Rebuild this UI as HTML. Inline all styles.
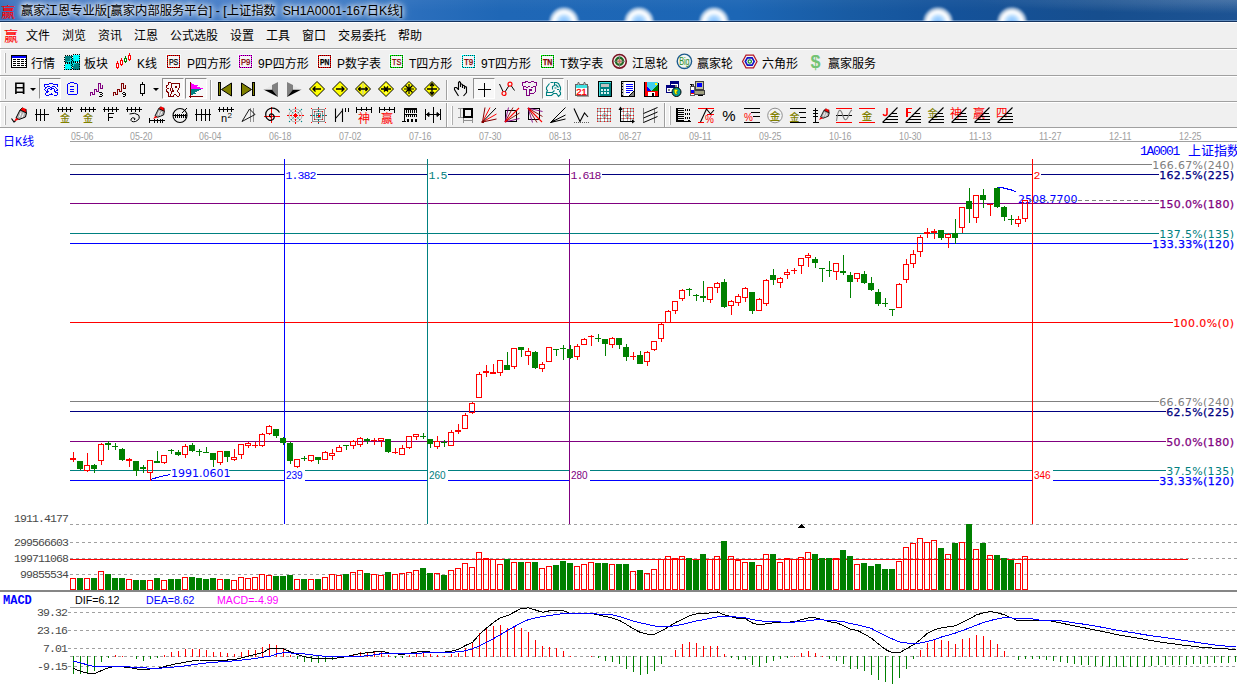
<!DOCTYPE html>
<html><head><meta charset="utf-8"><title>chart</title><style>
html,body{margin:0;padding:0}
body{width:1237px;height:685px;overflow:hidden;background:#fff;position:relative;font-family:"Liberation Sans","Noto Sans CJK SC",sans-serif;font-size:12px}
#title{position:absolute;left:0;top:0;width:1237px;height:21px;overflow:hidden;border-bottom:1px solid #14335f;box-shadow:inset 0 -1px 0 rgba(150,185,225,.55);
 background:linear-gradient(90deg,#3c6fb9 0,#4577c0 20px,#4a80ca 120px,#3f7ac5 330px,#2a6ebc 420px,#1f67b6 500px,#1c66b5 740px,#185ba3 850px,#14529a 950px,#164e8e 1100px,#1d5393 1237px)}
#title:before{content:"";position:absolute;left:0;top:0;width:100%;height:21px;background:linear-gradient(180deg,rgba(255,255,255,.04),rgba(255,255,255,0) 55%),radial-gradient(ellipse 260px 14px at 1237px 0,rgba(255,255,255,.16),rgba(255,255,255,0))}
.blob{position:absolute;top:6.5px;width:30px;height:30px;border-radius:50%;filter:blur(1.2px);background:radial-gradient(circle at 50% 50%,#86c0ff 0,#a4d3ff 22%,#f4faff 42%,#ffffff 50%,rgba(255,255,255,.55) 64%,rgba(200,225,255,.18) 80%,rgba(255,255,255,0) 100%)}
#tt{position:absolute;left:21px;top:3px;font-size:12.3px;line-height:17px;color:#000;white-space:nowrap;text-shadow:0 0 5px #fff,0 0 6px #fff,0 0 8px #fff}
.logo{position:absolute;font-family:"Noto Sans CJK SC",sans-serif;font-size:14px;line-height:16px;color:#f00;font-weight:400}
#menu{position:absolute;left:0;top:22px;width:1237px;height:26px;background:#f0f0f0;border-top:1px solid #fff;border-bottom:1px solid #a0a0a0;box-sizing:content-box;height:25px}
.mi{position:absolute;top:5px;line-height:16px;font-size:12px;color:#000}
.tb{position:absolute;left:0;width:1237px;background:#f0f0f0;border-top:1px solid #fff;box-sizing:border-box;border-bottom:1px solid #a0a0a0}
.grip{position:absolute;width:1px;background:#b0b0b0;border-left:1px solid #fff}
.sep{position:absolute;width:1px;background:#a0a0a0;border-right:1px solid #fff}
.ic{position:absolute;overflow:visible}
.tt{position:absolute;top:5.5px;line-height:16px;font-size:12px;color:#000;white-space:nowrap}
.ri{position:absolute;font-family:"Noto Sans CJK SC",sans-serif;font-weight:700;font-size:12.5px;line-height:14px;color:#000;transform:scaleX(1.08);transform-origin:0 0}
.dd{position:absolute;width:0;height:0;border-left:3px solid transparent;border-right:3px solid transparent;border-top:3px solid #000}
.pressed{position:absolute;width:22px;height:21px;background:#f8f8f8;border-left:1px solid #909090;border-top:1px solid #909090;border-right:1px solid #fff;border-bottom:1px solid #fff;box-sizing:border-box}
svg text{white-space:pre}
.dt{font-family:"Liberation Sans",sans-serif;font-size:10px;fill:#a0a0a0}
.ss{font-family:"Liberation Mono","Noto Sans CJK SC",sans-serif;font-size:12px}
.mono{font-family:"Liberation Mono",monospace;font-size:11.5px;letter-spacing:-0.9px}
.vd{font-family:"DejaVu Sans",sans-serif;font-size:11px}
.ar{font-family:"Liberation Sans",sans-serif;font-size:10px}
.ar11{font-family:"Liberation Sans",sans-serif;font-size:11px}
</style></head><body>
<div id="title"><div class="blob" style="left:548.5px"></div><div class="blob" style="left:623.5px"></div><div class="blob" style="left:699px"></div><div class="blob" style="left:923px"></div><div class="blob" style="left:997px"></div><span class="logo" style="left:1px;top:3px">赢</span><span id="tt">赢家江恩专业版[赢家内部服务平台] - [上证指数&nbsp; SH1A0001-167日K线]</span></div>
<div id="menu"><span class="logo" style="left:4px;top:4px">赢</span><span class="mi" style="left:26px">文件</span><span class="mi" style="left:62px">浏览</span><span class="mi" style="left:98px">资讯</span><span class="mi" style="left:134px">江恩</span><span class="mi" style="left:170px">公式选股</span><span class="mi" style="left:230px">设置</span><span class="mi" style="left:266px">工具</span><span class="mi" style="left:302px">窗口</span><span class="mi" style="left:338px">交易委托</span><span class="mi" style="left:398px">帮助</span></div>
<div class="tb" style="top:49px;height:27px"><div class="grip" style="left:4px;top:3px;height:20px"></div><svg class="ic" style="left:11px;top:4px" width="16" height="16" viewBox="0 0 16 16"><g shape-rendering="crispEdges"><rect x="0.5" y="1.5" width="15" height="12" fill="#fff" stroke="#000"/><rect x="1" y="2" width="14" height="2" fill="#0000ff"/><line x1="2" y1="5.5" x2="15" y2="5.5" stroke="#000" stroke-dasharray="3 1"/><line x1="2" y1="7.5" x2="15" y2="7.5" stroke="#000" stroke-dasharray="3 1"/><line x1="2" y1="9.5" x2="15" y2="9.5" stroke="#000" stroke-dasharray="3 1"/><line x1="2" y1="11.5" x2="15" y2="11.5" stroke="#000" stroke-dasharray="3 1"/></g></svg><span class="tt" style="left:31px">行情</span><svg class="ic" style="left:64px;top:4px" width="16" height="16" viewBox="0 0 16 16"><g shape-rendering="crispEdges"><rect x="0.5" y="1.5" width="7" height="7" fill="#008080"/><rect x="8.5" y="0.5" width="7" height="7" fill="#00ffff"/><rect x="0.5" y="9.5" width="7" height="6" fill="#00ffff"/><rect x="8.5" y="8.5" width="7" height="7" fill="#008080"/><rect x="6" y="4" width="4" height="8" fill="#00d8d8"/><rect x="3" y="7" width="9" height="3" fill="#00d8d8"/><rect x="2" y="3" width="4" height="4" fill="#008080"/><rect x="10" y="10" width="4" height="4" fill="#008080"/><rect x="10" y="2" width="4" height="4" fill="#00ffff"/><rect x="2" y="11" width="4" height="3" fill="#00ffff"/><rect x="0.5" y="1.5" width="7" height="7" fill="none" stroke="#000" stroke-dasharray="1 1"/><rect x="8.5" y="0.5" width="7" height="7" fill="none" stroke="#000" stroke-dasharray="1 1"/><rect x="0.5" y="9.5" width="7" height="6" fill="none" stroke="#000" stroke-dasharray="1 1"/><rect x="8.5" y="8.5" width="7" height="7" fill="none" stroke="#000" stroke-dasharray="1 1"/></g></svg><span class="tt" style="left:84px">板块</span><svg class="ic" style="left:116px;top:4px" width="16" height="16" viewBox="0 0 16 16"><g shape-rendering="crispEdges"><line x1="1.5" y1="7" x2="1.5" y2="15" stroke="#ff0000" stroke-width="1"/><rect x="0.5" y="9.5" width="2" height="4" fill="#fff" stroke="#ff0000"/><line x1="5.5" y1="4" x2="5.5" y2="12" stroke="#ff0000" stroke-width="1"/><rect x="4.5" y="6.5" width="2" height="4" fill="#fff" stroke="#ff0000"/><line x1="9.5" y1="2" x2="9.5" y2="9" stroke="#008000" stroke-width="1"/><rect x="8.5" y="4.5" width="2" height="3" fill="#fff" stroke="#008000"/><line x1="13.5" y1="-1" x2="13.5" y2="7" stroke="#ff0000" stroke-width="1"/><rect x="12.5" y="1.5" width="2" height="4" fill="#fff" stroke="#ff0000"/></g></svg><span class="tt" style="left:137px">K线</span><svg class="ic" style="left:167px;top:4px" width="16" height="16" viewBox="0 0 16 16"><g shape-rendering="crispEdges"><rect x="-0.5" y="0.5" width="14" height="14" fill="none" stroke="#f4fcfc"/><rect x="0.5" y="1.5" width="12" height="12" fill="#f6f6f6" stroke="#ff0000"/><rect x="0.5" y="1.5" width="12" height="12" fill="none" stroke="#000" stroke-opacity=".7" stroke-dasharray="1 1" stroke-dashoffset="1"/></g><text x="6.6" y="10.7" fill="#000" font-size="8.2" font-family="Liberation Sans,'Noto Sans CJK SC',sans-serif" font-weight="normal" text-anchor="middle" textLength="9.4" lengthAdjust="spacingAndGlyphs" stroke="#000" stroke-width=".25">PS</text></svg><span class="tt" style="left:187px">P四方形</span><svg class="ic" style="left:239px;top:4px" width="16" height="16" viewBox="0 0 16 16"><g shape-rendering="crispEdges"><rect x="-0.5" y="0.5" width="14" height="14" fill="none" stroke="#f4fcfc"/><rect x="0.5" y="1.5" width="12" height="12" fill="#f6f6f6" stroke="#ff00ff"/><rect x="0.5" y="1.5" width="12" height="12" fill="none" stroke="#000" stroke-opacity=".7" stroke-dasharray="1 1" stroke-dashoffset="1"/></g><text x="6.6" y="10.7" fill="#800000" font-size="8.2" font-family="Liberation Sans,'Noto Sans CJK SC',sans-serif" font-weight="normal" text-anchor="middle" textLength="9.4" lengthAdjust="spacingAndGlyphs" stroke="#800000" stroke-width=".25">P9</text></svg><span class="tt" style="left:258px">9P四方形</span><svg class="ic" style="left:318px;top:4px" width="16" height="16" viewBox="0 0 16 16"><g shape-rendering="crispEdges"><rect x="-0.5" y="0.5" width="14" height="14" fill="none" stroke="#f4fcfc"/><rect x="0.5" y="1.5" width="12" height="12" fill="#f6f6f6" stroke="#ff0000"/><rect x="0.5" y="1.5" width="12" height="12" fill="none" stroke="#000" stroke-opacity=".7" stroke-dasharray="1 1" stroke-dashoffset="1"/></g><text x="6.6" y="10.7" fill="#000" font-size="8.2" font-family="Liberation Sans,'Noto Sans CJK SC',sans-serif" font-weight="bold" text-anchor="middle" textLength="9.4" lengthAdjust="spacingAndGlyphs" stroke="#000" stroke-width=".25">PN</text></svg><span class="tt" style="left:337px">P数字表</span><svg class="ic" style="left:390px;top:4px" width="16" height="16" viewBox="0 0 16 16"><g shape-rendering="crispEdges"><rect x="-0.5" y="0.5" width="14" height="14" fill="none" stroke="#f4fcfc"/><rect x="0.5" y="1.5" width="12" height="12" fill="#f6f6f6" stroke="#00ff00"/><rect x="0.5" y="1.5" width="12" height="12" fill="none" stroke="#000" stroke-opacity=".7" stroke-dasharray="1 1" stroke-dashoffset="1"/></g><text x="6.6" y="10.7" fill="#800000" font-size="8.2" font-family="Liberation Sans,'Noto Sans CJK SC',sans-serif" font-weight="normal" text-anchor="middle" textLength="9.4" lengthAdjust="spacingAndGlyphs" stroke="#800000" stroke-width=".25">TS</text></svg><span class="tt" style="left:409px">T四方形</span><svg class="ic" style="left:462px;top:4px" width="16" height="16" viewBox="0 0 16 16"><g shape-rendering="crispEdges"><rect x="-0.5" y="0.5" width="14" height="14" fill="none" stroke="#f4fcfc"/><rect x="0.5" y="1.5" width="12" height="12" fill="#f6f6f6" stroke="#00ffff"/><rect x="0.5" y="1.5" width="12" height="12" fill="none" stroke="#000" stroke-opacity=".7" stroke-dasharray="1 1" stroke-dashoffset="1"/></g><text x="6.6" y="10.7" fill="#800000" font-size="8.2" font-family="Liberation Sans,'Noto Sans CJK SC',sans-serif" font-weight="normal" text-anchor="middle" textLength="9.4" lengthAdjust="spacingAndGlyphs" stroke="#800000" stroke-width=".25">T9</text></svg><span class="tt" style="left:481px">9T四方形</span><svg class="ic" style="left:541px;top:4px" width="16" height="16" viewBox="0 0 16 16"><g shape-rendering="crispEdges"><rect x="-0.5" y="0.5" width="14" height="14" fill="none" stroke="#f4fcfc"/><rect x="0.5" y="1.5" width="12" height="12" fill="#f6f6f6" stroke="#00ff00"/><rect x="0.5" y="1.5" width="12" height="12" fill="none" stroke="#000" stroke-opacity=".7" stroke-dasharray="1 1" stroke-dashoffset="1"/></g><text x="6.6" y="10.7" fill="#800000" font-size="8.2" font-family="Liberation Sans,'Noto Sans CJK SC',sans-serif" font-weight="bold" text-anchor="middle" textLength="9.4" lengthAdjust="spacingAndGlyphs" stroke="#800000" stroke-width=".25">TN</text></svg><span class="tt" style="left:560px">T数字表</span><svg class="ic" style="left:611px;top:4px" width="16" height="16" viewBox="0 0 16 16"><circle cx="8.5" cy="7.3" r="6.8" fill="#f0ebe6" stroke="#7a1424" stroke-width="1.6"/><circle cx="8.5" cy="7.3" r="3.6" fill="#f0b4a4" stroke="#1c6c24" stroke-width="2.2"/><path d="M2.5 7.3H14.5M8.5 1.3V13.3" stroke="#808080" stroke-width=".9" fill="none"/><circle cx="8.5" cy="7.3" r="1" fill="#e86848"/></svg><span class="tt" style="left:632px">江恩轮</span><svg class="ic" style="left:676px;top:4px" width="16" height="16" viewBox="0 0 16 16"><circle cx="8.4" cy="7.3" r="7.2" fill="#f2f6f2" stroke="#1c5a8c" stroke-width="1.4"/><text x="8.4" y="10.9" fill="#2a8a2a" font-size="10" font-family="Liberation Sans,'Noto Sans CJK SC',sans-serif" font-weight="normal" text-anchor="middle" textLength="10.5" lengthAdjust="spacingAndGlyphs">Big</text></svg><span class="tt" style="left:697px">赢家轮</span><svg class="ic" style="left:741px;top:4px" width="16" height="16" viewBox="0 0 16 16"><polygon points="1.5,7.5 5,1.2 12.5,1.2 16,7.5 12.5,13.8 5,13.8" fill="#f4f4f4" stroke="#b41424" stroke-width="1.2"/><polygon points="4.3,7.5 6.4,3.9 11.1,3.9 13.2,7.5 11.1,11.1 6.4,11.1" fill="#fff" stroke="#1414c4" stroke-width="1.6"/><circle cx="8.75" cy="7.5" r="1.7" fill="#fff" stroke="#108828" stroke-width="1.2"/></svg><span class="tt" style="left:762px">六角形</span><svg class="ic" style="left:808px;top:4px" width="16" height="16" viewBox="0 0 16 16"><text x="7.5" y="14.2" fill="#74c474" font-size="18" font-family="Liberation Sans,'Noto Sans CJK SC',sans-serif" font-weight="bold" text-anchor="middle">$</text></svg><span class="tt" style="left:828px">赢家服务</span></div>
<div class="tb" style="top:76px;height:26px"><div class="grip" style="left:4px;top:3px;height:19px"></div><span class="ri" style="left:12.5px;top:4px">日</span><div class="dd" style="left:30px;top:11px"></div><div class="pressed" style="left:39px;top:1px"></div><div class="pressed" style="left:162px;top:1px"></div><div class="pressed" style="left:185px;top:1px"></div><div class="pressed" style="left:473px;top:1px"></div><div class="pressed" style="left:542px;top:1px"></div><svg class="ic" style="left:43px;top:4px" width="16" height="16" viewBox="0 0 16 16"><g shape-rendering="crispEdges"><rect x="6" y="2" width="4" height="1" fill="#0000ff"/><rect x="1" y="3" width="5" height="1" fill="#0000ff"/><rect x="10" y="3" width="5" height="1" fill="#0000ff"/><rect x="1" y="4" width="1" height="1" fill="#0000ff"/><rect x="14" y="4" width="1" height="1" fill="#0000ff"/><rect x="1" y="5" width="1" height="1" fill="#0000ff"/><rect x="4" y="5" width="3" height="1" fill="#0000ff"/><rect x="9" y="5" width="3" height="1" fill="#0000ff"/><rect x="14" y="5" width="1" height="1" fill="#0000ff"/><rect x="2" y="6" width="2" height="1" fill="#0000ff"/><rect x="7" y="6" width="2" height="1" fill="#0000ff"/><rect x="12" y="6" width="1" height="1" fill="#0000ff"/><rect x="2" y="7" width="1" height="1" fill="#0000ff"/><rect x="5" y="7" width="2" height="1" fill="#0000ff"/><rect x="8" y="7" width="3" height="1" fill="#0000ff"/><rect x="13" y="7" width="1" height="1" fill="#0000ff"/><rect x="1" y="8" width="1" height="1" fill="#0000ff"/><rect x="4" y="8" width="1" height="1" fill="#0000ff"/><rect x="7" y="8" width="2" height="1" fill="#0000ff"/><rect x="11" y="8" width="1" height="1" fill="#0000ff"/><rect x="14" y="8" width="1" height="1" fill="#0000ff"/><rect x="2" y="9" width="1" height="1" fill="#0000ff"/><rect x="4" y="9" width="1" height="1" fill="#0000ff"/><rect x="11" y="9" width="1" height="1" fill="#0000ff"/><rect x="13" y="9" width="2" height="1" fill="#0000ff"/><rect x="3" y="10" width="3" height="1" fill="#0000ff"/><rect x="11" y="10" width="2" height="1" fill="#0000ff"/><rect x="3" y="11" width="2" height="1" fill="#0000ff"/><rect x="12" y="11" width="3" height="1" fill="#0000ff"/><rect x="2" y="12" width="1" height="1" fill="#0000ff"/><rect x="8" y="12" width="1" height="1" fill="#0000ff"/><rect x="14" y="12" width="1" height="1" fill="#0000ff"/><rect x="2" y="13" width="1" height="1" fill="#0000ff"/><rect x="6" y="13" width="4" height="1" fill="#0000ff"/><rect x="14" y="13" width="1" height="1" fill="#0000ff"/><rect x="3" y="14" width="3" height="1" fill="#0000ff"/><rect x="11" y="14" width="3" height="1" fill="#0000ff"/></g></svg><svg class="ic" style="left:66px;top:4px" width="16" height="16" viewBox="0 0 16 16"><g shape-rendering="crispEdges"><path d="M2 2.5H4 M8 2.5H11 M4 1.5H8 M1.5 3V13 M11.5 3V13 M2 13.5H11 M4 5.5H8 M4 8.5H8 M4 10.5H8" stroke="#0000ff" fill="none" stroke-width="1" /></g></svg><svg class="ic" style="left:89px;top:4px" width="16" height="16" viewBox="0 0 16 16"><g shape-rendering="crispEdges"><path d="M1.5 15 V11.5 H3.5 V13.5 H5.5 V8.5 H7.5 V10.5 H9.5 V2.5 H11.5 V7.5 H13.5 V4" stroke="#800080" fill="none" stroke-width="1" /><rect x="10" y="11" width="1" height="1" fill="#000"/><rect x="11" y="11" width="1" height="1" fill="#000"/><rect x="12" y="11" width="1" height="1" fill="#000"/><rect x="13" y="12" width="1" height="1" fill="#000"/><rect x="11" y="13" width="1" height="1" fill="#000"/><rect x="12" y="13" width="1" height="1" fill="#000"/><rect x="13" y="14" width="1" height="1" fill="#000"/><rect x="10" y="15" width="1" height="1" fill="#000"/><rect x="11" y="15" width="1" height="1" fill="#000"/><rect x="12" y="15" width="1" height="1" fill="#000"/></g></svg><svg class="ic" style="left:112px;top:4px" width="16" height="16" viewBox="0 0 16 16"><g shape-rendering="crispEdges"><path d="M1.5 15 V11.5 H3.5 V13.5 H5.5 V8.5 H7.5 V10.5 H9.5 V2.5 H11.5 V7.5 H13.5 V4" stroke="#800000" fill="none" stroke-width="1" /><rect x="11" y="11" width="1" height="1" fill="#000"/><rect x="12" y="11" width="1" height="1" fill="#000"/><rect x="10" y="12" width="1" height="1" fill="#000"/><rect x="13" y="12" width="1" height="1" fill="#000"/><rect x="11" y="13" width="1" height="1" fill="#000"/><rect x="12" y="13" width="1" height="1" fill="#000"/><rect x="13" y="13" width="1" height="1" fill="#000"/><rect x="13" y="14" width="1" height="1" fill="#000"/><rect x="11" y="15" width="1" height="1" fill="#000"/><rect x="12" y="15" width="1" height="1" fill="#000"/></g></svg><svg class="ic" style="left:136px;top:4px" width="16" height="16" viewBox="0 0 16 16"><g shape-rendering="crispEdges"><line x1="6.5" y1="1" x2="6.5" y2="15" stroke="#000" stroke-width="1"/><rect x="4.5" y="3.5" width="4" height="9" fill="#f0f0f0" stroke="#000"/><line x1="5" y1="3" x2="9" y2="3" stroke="#000" stroke-width="0"/></g></svg><svg class="ic" style="left:166px;top:4px" width="16" height="16" viewBox="0 0 16 16"><g shape-rendering="crispEdges"><rect x="2" y="1" width="3" height="1" fill="#800000"/><rect x="2" y="2" width="1" height="1" fill="#800000"/><rect x="5" y="2" width="9" height="1" fill="#800000"/><rect x="2" y="3" width="1" height="1" fill="#800000"/><rect x="5" y="3" width="1" height="1" fill="#800000"/><rect x="13" y="3" width="1" height="1" fill="#800000"/><rect x="0" y="4" width="2" height="1" fill="#800000"/><rect x="5" y="4" width="1" height="1" fill="#800000"/><rect x="13" y="4" width="1" height="1" fill="#800000"/><rect x="0" y="5" width="1" height="1" fill="#800000"/><rect x="5" y="5" width="1" height="1" fill="#800000"/><rect x="9" y="5" width="2" height="1" fill="#800000"/><rect x="13" y="5" width="1" height="1" fill="#800000"/><rect x="0" y="6" width="1" height="1" fill="#800000"/><rect x="5" y="6" width="1" height="1" fill="#800000"/><rect x="9" y="6" width="2" height="1" fill="#800000"/><rect x="13" y="6" width="1" height="1" fill="#800000"/><rect x="1" y="7" width="2" height="1" fill="#800000"/><rect x="4" y="7" width="1" height="1" fill="#800000"/><rect x="6" y="7" width="1" height="1" fill="#800000"/><rect x="12" y="7" width="1" height="1" fill="#800000"/><rect x="0" y="8" width="1" height="1" fill="#800000"/><rect x="4" y="8" width="1" height="1" fill="#800000"/><rect x="6" y="8" width="1" height="1" fill="#800000"/><rect x="12" y="8" width="1" height="1" fill="#800000"/><rect x="0" y="9" width="1" height="1" fill="#800000"/><rect x="4" y="9" width="1" height="1" fill="#800000"/><rect x="6" y="9" width="2" height="1" fill="#800000"/><rect x="11" y="9" width="1" height="1" fill="#800000"/><rect x="0" y="10" width="2" height="1" fill="#800000"/><rect x="5" y="10" width="3" height="1" fill="#800000"/><rect x="11" y="10" width="1" height="1" fill="#800000"/><rect x="1" y="11" width="2" height="1" fill="#800000"/><rect x="5" y="11" width="1" height="1" fill="#800000"/><rect x="12" y="11" width="1" height="1" fill="#800000"/><rect x="2" y="12" width="1" height="1" fill="#800000"/><rect x="5" y="12" width="1" height="1" fill="#800000"/><rect x="13" y="12" width="1" height="1" fill="#800000"/><rect x="2" y="13" width="1" height="1" fill="#800000"/><rect x="4" y="13" width="1" height="1" fill="#800000"/><rect x="8" y="13" width="2" height="1" fill="#800000"/><rect x="13" y="13" width="1" height="1" fill="#800000"/><rect x="2" y="14" width="1" height="1" fill="#800000"/><rect x="4" y="14" width="1" height="1" fill="#800000"/><rect x="7" y="14" width="1" height="1" fill="#800000"/><rect x="10" y="14" width="1" height="1" fill="#800000"/><rect x="13" y="14" width="1" height="1" fill="#800000"/><rect x="2" y="15" width="6" height="1" fill="#800000"/><rect x="11" y="15" width="2" height="1" fill="#800000"/></g></svg><svg class="ic" style="left:189px;top:4px" width="16" height="16" viewBox="0 0 16 16"><g shape-rendering="crispEdges"><g transform="translate(-1,1)"><polygon points="3,1 3,7 15,7 15,6 12,6 12,5 9,5 9,4 10,4 10,3 6,3 6,2 4,2 4,1" fill="#ff00ff"/><polygon points="3,7 13,7 13,8 11,8 11,9 9,9 9,10 7,10 7,11 8,11 8,12 5,12 5,13 3,13" fill="#008080"/><line x1="2.5" y1="0" x2="2.5" y2="16" stroke="#800000" stroke-width="1"/><line x1="1" y1="14.5" x2="15" y2="14.5" stroke="#800000" stroke-width="1"/><line x1="1" y1="14" x2="2" y2="14" stroke="#800000" stroke-width="1"/></g></g></svg><svg class="ic" style="left:217px;top:4px" width="16" height="16" viewBox="0 0 16 16"><g shape-rendering="crispEdges"><rect x="1.5" y="1.5" width="2" height="13" fill="#808000" stroke="#000"/></g><polygon points="14.5,2 14.5,15 4.5,8.5" fill="#808000" stroke="#000"/></svg><svg class="ic" style="left:240px;top:4px" width="16" height="16" viewBox="0 0 16 16"><g shape-rendering="crispEdges"><rect x="12.5" y="1.5" width="2" height="13" fill="#808000" stroke="#000"/></g><polygon points="1.5,2 1.5,15 11.5,8.5" fill="#808000" stroke="#000"/></svg><svg class="ic" style="left:263px;top:4px" width="16" height="16" viewBox="0 0 16 16"><polygon points="0.5,8.5 15,1 15,8.5" fill="#fff"/><polygon points="9,4 15,1 15,16 9,8.5" fill="#808080"/><polygon points="0.5,8.5 9,8.5 15,16" fill="#000"/><polygon points="0.5,8.5 9,4 9,8.5" fill="#e8e8e8"/></svg><svg class="ic" style="left:286px;top:4px" width="16" height="16" viewBox="0 0 16 16"><polygon points="15.5,8.5 1,1 1,8.5" fill="#fff"/><polygon points="7,4 1,1 1,16 7,8.5" fill="#808080"/><polygon points="15.5,8.5 7,8.5 1,16" fill="#000"/><polygon points="15.5,8.5 7,4 7,8.5" fill="#e8e8e8"/></svg><svg class="ic" style="left:309px;top:4px" width="16" height="16" viewBox="0 0 16 16"><polygon points="8,0.5 15.5,8 8,15.5 0.5,8" fill="#ffff00" stroke="#000" stroke-width="1"/><path d="M12 8H4 M6.5 5.5L4 8L6.5 10.5" stroke="#000" fill="none" stroke-width="1.3" /></svg><svg class="ic" style="left:332px;top:4px" width="16" height="16" viewBox="0 0 16 16"><polygon points="8,0.5 15.5,8 8,15.5 0.5,8" fill="#ffff00" stroke="#000" stroke-width="1"/><path d="M4 8H12 M9.5 5.5L12 8L9.5 10.5" stroke="#000" fill="none" stroke-width="1.3" /></svg><svg class="ic" style="left:355px;top:4px" width="16" height="16" viewBox="0 0 16 16"><polygon points="8,0.5 15.5,8 8,15.5 0.5,8" fill="#ffff00" stroke="#000" stroke-width="1"/><line x1="8" y1="2" x2="8" y2="14" stroke="#c0c0c0" stroke-width="1"/><path d="M3.5 8H12.5 M5.5 6L3.5 8L5.5 10 M10.5 6L12.5 8L10.5 10" stroke="#000" fill="none" stroke-width="1.3" /></svg><svg class="ic" style="left:378px;top:4px" width="16" height="16" viewBox="0 0 16 16"><polygon points="8,0.5 15.5,8 8,15.5 0.5,8" fill="#ffff00" stroke="#000" stroke-width="1"/><path d="M3 8H13 M6 5.5L8 8L6 10.5 M10 5.5L8 8L10 10.5" stroke="#000" fill="none" stroke-width="1.3" /><circle cx="8" cy="4" r=".7" fill="#fff"/><circle cx="8" cy="12" r=".7" fill="#fff"/></svg><svg class="ic" style="left:401px;top:4px" width="16" height="16" viewBox="0 0 16 16"><polygon points="8,0.5 15.5,8 8,15.5 0.5,8" fill="#ffff00" stroke="#000" stroke-width="1"/><path d="M3 8H13 M8 3V13 M4.5 4.5L11.5 11.5 M11.5 4.5L4.5 11.5" stroke="#000" fill="none" stroke-width="1.2" /></svg><svg class="ic" style="left:424px;top:4px" width="16" height="16" viewBox="0 0 16 16"><polygon points="8,0.5 15.5,8 8,15.5 0.5,8" fill="#ffff00" stroke="#000" stroke-width="1"/><path d="M3 8H13 M8 2.5V13.5 M6 5L8 2.5L10 5 M6 11L8 13.5L10 11" stroke="#000" fill="none" stroke-width="1.3" /></svg><svg class="ic" style="left:453px;top:4px" width="16" height="16" viewBox="0 0 16 16"><path d="M1.5 6.5H3.5L5.5 8.5 M1.5 6.5V8.5L5.5 15 M5.5 9V1.5L6.5 0.5L7.5 1.5V6 M7.5 2.5L9.5 3.5V7 M9.5 4L11.5 4.8V8 M11.5 5.2L13.5 6.2V11.5L10.5 15" stroke="#000" fill="none" stroke-width="1.1" /></svg><svg class="ic" style="left:477px;top:4px" width="16" height="16" viewBox="0 0 16 16"><g shape-rendering="crispEdges"><line x1="1" y1="8.5" x2="14" y2="8.5" stroke="#000" stroke-width="1"/><line x1="7.5" y1="2" x2="7.5" y2="16" stroke="#000" stroke-width="1"/></g></svg><svg class="ic" style="left:499px;top:4px" width="16" height="16" viewBox="0 0 16 16"><path d="M0.5 3 L5 12.5 L11 3 L15.5 9.5" stroke="#000" fill="none" stroke-width="1" /><circle cx="5" cy="12.5" r="2" fill="#f0f0f0" stroke="#ff0000" stroke-width="1.2"/><circle cx="11" cy="3.2" r="2" fill="#f0f0f0" stroke="#ff0000" stroke-width="1.2"/></svg><svg class="ic" style="left:522px;top:4px" width="16" height="16" viewBox="0 0 16 16"><g shape-rendering="crispEdges"><rect x="3" y="0" width="3" height="1" fill="#800080"/><rect x="9" y="0" width="3" height="1" fill="#800080"/><rect x="0" y="1" width="4" height="1" fill="#800080"/><rect x="6" y="1" width="3" height="1" fill="#800080"/><rect x="12" y="1" width="3" height="1" fill="#800080"/><rect x="0" y="2" width="1" height="1" fill="#800080"/><rect x="14" y="2" width="1" height="1" fill="#800080"/><rect x="0" y="3" width="1" height="1" fill="#800080"/><rect x="14" y="3" width="1" height="1" fill="#800080"/><rect x="0" y="4" width="1" height="1" fill="#800080"/><rect x="14" y="4" width="1" height="1" fill="#800080"/><rect x="1" y="5" width="3" height="1" fill="#800080"/><rect x="6" y="5" width="2" height="1" fill="#800080"/><rect x="11" y="5" width="3" height="1" fill="#800080"/><rect x="1" y="6" width="1" height="1" fill="#800080"/><rect x="4" y="6" width="2" height="1" fill="#800080"/><rect x="9" y="6" width="2" height="1" fill="#800080"/><rect x="13" y="6" width="1" height="1" fill="#800080"/><rect x="1" y="7" width="1" height="1" fill="#800080"/><rect x="13" y="7" width="1" height="1" fill="#800080"/><rect x="1" y="8" width="4" height="1" fill="#800080"/><rect x="7" y="8" width="3" height="1" fill="#800080"/><rect x="13" y="8" width="1" height="1" fill="#800080"/><rect x="4" y="9" width="1" height="1" fill="#800080"/><rect x="7" y="9" width="3" height="1" fill="#800080"/><rect x="13" y="9" width="1" height="1" fill="#800080"/><rect x="4" y="10" width="1" height="1" fill="#800080"/><rect x="7" y="10" width="1" height="1" fill="#800080"/><rect x="13" y="10" width="1" height="1" fill="#800080"/><rect x="4" y="11" width="1" height="1" fill="#800080"/><rect x="7" y="11" width="1" height="1" fill="#800080"/><rect x="12" y="11" width="1" height="1" fill="#800080"/><rect x="4" y="12" width="1" height="1" fill="#800080"/><rect x="7" y="12" width="5" height="1" fill="#800080"/><rect x="4" y="13" width="1" height="1" fill="#800080"/><rect x="7" y="13" width="1" height="1" fill="#800080"/><rect x="4" y="14" width="4" height="1" fill="#800080"/></g></svg><svg class="ic" style="left:546px;top:4px" width="16" height="16" viewBox="0 0 16 16"><path d="M4.5 1.5H7.5 M3.5 2.5L0.5 6.5V8.5L1.5 9.5L0.5 11.5V14.5H5.5L7.5 12.5H10.5L12.5 15.5L14.5 13.5V11.5L13.5 10.5L14.5 8.5V6.5L12.5 2.5L10.5 1.5H8.5V4.5L6.5 5.5V8.5 M0.5 11.5H6.5L8.5 9.5 M9.5 3.5L12.5 6.5 M8.5 7H10.5 M11 8.5H13" stroke="#008080" fill="none" stroke-width="1.1" /></svg><svg class="ic" style="left:574px;top:4px" width="16" height="16" viewBox="0 0 16 16"><g shape-rendering="crispEdges"><rect x="1.5" y="3.5" width="12" height="11" fill="#fff" stroke="#606060"/><rect x="2" y="4" width="11" height="3" fill="#40e0e0"/><line x1="14.5" y1="5" x2="14.5" y2="15" stroke="#a0a0a0" stroke-width="1"/><line x1="3" y1="15.5" x2="15" y2="15.5" stroke="#a0a0a0" stroke-width="1"/></g><path d="M3.5 3.5L4.5 1L5.5 3.5 M9.5 3.5L10.5 1L11.5 3.5" stroke="#606060" fill="#fff" stroke-width="1" /><text x="7.5" y="14.3" fill="#ff0000" font-size="9.5" font-family="Liberation Sans,'Noto Sans CJK SC',sans-serif" font-weight="normal" text-anchor="middle" stroke="#ff0000" stroke-width=".3">21</text></svg><svg class="ic" style="left:597px;top:4px" width="16" height="16" viewBox="0 0 16 16"><g shape-rendering="crispEdges"><rect x="1.5" y="0.5" width="13" height="15" fill="#008080" stroke="#000"/><rect x="2" y="1" width="12" height="1" fill="#40e0e0"/><rect x="2" y="1" width="1" height="14" fill="#40e0e0"/><rect x="4" y="3" width="8" height="3" fill="#c0c0c0"/><rect x="4" y="8" width="2" height="2" fill="#d8f0f0"/><rect x="4" y="11" width="2" height="2" fill="#d8f0f0"/><rect x="7" y="8" width="2" height="2" fill="#d8f0f0"/><rect x="7" y="11" width="2" height="2" fill="#d8f0f0"/><rect x="10" y="8" width="2" height="2" fill="#d8f0f0"/><rect x="10" y="11" width="2" height="2" fill="#d8f0f0"/></g></svg><svg class="ic" style="left:620px;top:4px" width="16" height="16" viewBox="0 0 16 16"><g shape-rendering="crispEdges"><rect x="1.5" y="0.5" width="13" height="15" fill="#fff" stroke="#000"/><rect x="2" y="1" width="2" height="14" fill="#c0c0c0"/><rect x="2" y="2" width="1" height="1" fill="#000"/><rect x="2" y="5" width="1" height="1" fill="#000"/><rect x="2" y="8" width="1" height="1" fill="#000"/><rect x="2" y="11" width="1" height="1" fill="#000"/><rect x="2" y="14" width="1" height="1" fill="#000"/><line x1="6" y1="3.5" x2="13" y2="3.5" stroke="#0000ff" stroke-width="1"/><line x1="6" y1="5.5" x2="13" y2="5.5" stroke="#0000ff" stroke-width="1"/><line x1="6" y1="7.5" x2="13" y2="7.5" stroke="#0000ff" stroke-width="1"/><line x1="6" y1="9.5" x2="13" y2="9.5" stroke="#0000ff" stroke-width="1"/><line x1="6" y1="11.5" x2="10" y2="11.5" stroke="#0000ff" stroke-width="1"/><polygon points="14,10 14,15 9,15" fill="#808080" stroke="#000"/></g></svg><svg class="ic" style="left:643px;top:4px" width="16" height="16" viewBox="0 0 16 16"><g shape-rendering="crispEdges"><rect x="1" y="1" width="14" height="14" fill="#ff0000"/><rect x="1" y="1" width="1" height="14" fill="#000"/><rect x="4" y="1" width="11" height="9" fill="#40d0f0"/><polygon points="15,4 15,10 8,10" fill="#008000"/><polygon points="4,6 4,10 9,10" fill="#0000ff"/><rect x="12" y="2" width="2" height="2" fill="#ffff00"/><rect x="5" y="11" width="7" height="4" fill="#fff"/><rect x="9" y="12" width="2" height="3" fill="#000"/><rect x="1" y="15" width="14" height="1" fill="#000"/><rect x="15" y="2" width="1" height="14" fill="#000"/></g></svg><svg class="ic" style="left:666px;top:4px" width="16" height="16" viewBox="0 0 16 16"><g shape-rendering="crispEdges"><rect x="4.5" y="0.5" width="8" height="7" fill="#fff" stroke="#000080"/><rect x="5" y="1" width="7" height="2" fill="#000080"/><rect x="0.5" y="4.5" width="8" height="7" fill="#fff" stroke="#000080"/><rect x="1" y="5" width="7" height="2" fill="#000080"/><rect x="2" y="8" width="2" height="2" fill="#808080"/><rect x="9" y="4" width="2" height="2" fill="#808080"/></g><circle cx="10.5" cy="11" r="4.5" fill="#00a0a0" stroke="#000"/><path d="M8 9 L10 8 L12 9.5 L10.5 11 L11.5 13 L9.5 13.5 L8.5 11.5Z" stroke="#606000" fill="#ffff00" stroke-width="0.6" /></svg><svg class="ic" style="left:689px;top:4px" width="16" height="16" viewBox="0 0 16 16"><g shape-rendering="crispEdges"><rect x="6.5" y="0.5" width="8" height="8" fill="#c0c0a0" stroke="#404040"/><rect x="8" y="2" width="5" height="4" fill="#0000ff"/><rect x="5.5" y="9.5" width="10" height="4" fill="#a0a080" stroke="#404040"/><rect x="9" y="14" width="5" height="1" fill="#000"/><rect x="1.5" y="5.5" width="4" height="9" fill="#fff" stroke="#606060"/><rect x="2" y="9" width="3" height="3" fill="#0000ff"/><rect x="2" y="12" width="3" height="1" fill="#ff0000"/><rect x="2.5" y="3.5" width="2" height="2" fill="#a0a0a0" stroke="#404040"/><line x1="1" y1="3" x2="3" y2="4.5" stroke="#000" stroke-width="1"/></g></svg><div class="dd" style="left:153px;top:11px"></div><div class="sep" style="left:210px;top:3px;height:20px"></div><div class="sep" style="left:446px;top:3px;height:20px"></div><div class="sep" style="left:567px;top:3px;height:20px"></div></div>
<div class="tb" style="top:102px;height:26px"><div class="grip" style="left:4px;top:3px;height:19px"></div><svg class="ic" style="left:11px;top:4px" width="16" height="16" viewBox="0 0 16 16"><polygon points="9,3 11.5,0.5 15,2 15.5,6" fill="#ff0000"/><polygon points="9,3 15.5,6 14.5,10 8,12.5 5,11" fill="#b0b0b0" stroke="#000" stroke-width="1"/><polygon points="5,11 8,12.5 3,14.5" fill="#ff0000"/><path d="M9 3 L11.5 0.5 M15 2 L15.5 6" stroke="#000" fill="none" stroke-width=".8"/><path d="M10 5.5L8.5 10 M12.5 6.5L11 10.5" stroke="#fff" fill="none" stroke-width="1"/><path d="M0.5 11.5 L3 15 L4.5 14" stroke="#000" fill="none" stroke-width="1.1" /></svg><svg class="ic" style="left:34px;top:4px" width="16" height="16" viewBox="0 0 16 16"><g shape-rendering="crispEdges"><line x1="1" y1="7.5" x2="15" y2="7.5" stroke="#000" stroke-width="1"/><line x1="2.5" y1="2" x2="2.5" y2="14" stroke="#000" stroke-width="1"/><line x1="6.5" y1="2" x2="6.5" y2="14" stroke="#000" stroke-width="1"/><line x1="10.5" y1="2" x2="10.5" y2="14" stroke="#000" stroke-width="1"/></g></svg><svg class="ic" style="left:57px;top:4px" width="16" height="16" viewBox="0 0 16 16"><g shape-rendering="crispEdges"><line x1="0" y1="2.5" x2="16" y2="2.5" stroke="#000" stroke-width="1"/><line x1="1.5" y1="0" x2="1.5" y2="5" stroke="#000" stroke-width="1"/><line x1="5.5" y1="0" x2="5.5" y2="5" stroke="#000" stroke-width="1"/><line x1="9.5" y1="0" x2="9.5" y2="5" stroke="#000" stroke-width="1"/><line x1="13.5" y1="0" x2="13.5" y2="5" stroke="#000" stroke-width="1"/></g><text x="8" y="15" fill="#808000" font-size="10" font-family="Noto Sans CJK SC,'Noto Sans CJK SC',sans-serif" font-weight="500" text-anchor="middle">金</text></svg><svg class="ic" style="left:80px;top:4px" width="16" height="16" viewBox="0 0 16 16"><g shape-rendering="crispEdges"><line x1="0" y1="2.5" x2="16" y2="2.5" stroke="#000" stroke-width="1"/><line x1="1.5" y1="0" x2="1.5" y2="5" stroke="#000" stroke-width="1"/><line x1="5.5" y1="0" x2="5.5" y2="5" stroke="#000" stroke-width="1"/><line x1="9.5" y1="0" x2="9.5" y2="5" stroke="#000" stroke-width="1"/><line x1="13.5" y1="0" x2="13.5" y2="5" stroke="#000" stroke-width="1"/></g><text x="8" y="15" fill="#808000" font-size="10" font-family="Noto Sans CJK SC,'Noto Sans CJK SC',sans-serif" font-weight="500" text-anchor="middle">金</text></svg><svg class="ic" style="left:103px;top:4px" width="16" height="16" viewBox="0 0 16 16"><g shape-rendering="crispEdges"><line x1="0" y1="2.5" x2="16" y2="2.5" stroke="#000" stroke-width="1"/><line x1="1.5" y1="0" x2="1.5" y2="5" stroke="#000" stroke-width="1"/><line x1="5.5" y1="0" x2="5.5" y2="5" stroke="#000" stroke-width="1"/><line x1="9.5" y1="0" x2="9.5" y2="5" stroke="#000" stroke-width="1"/><line x1="13.5" y1="0" x2="13.5" y2="5" stroke="#000" stroke-width="1"/></g><g shape-rendering="crispEdges"><path d="M5.5 14V6.5H10.5 M5.5 10.5H9.5" stroke="#000" fill="none" stroke-width="1.3" /></g></svg><svg class="ic" style="left:126px;top:4px" width="16" height="16" viewBox="0 0 16 16"><g shape-rendering="crispEdges"><line x1="0" y1="2.5" x2="16" y2="2.5" stroke="#000" stroke-width="1"/><line x1="1.5" y1="0" x2="1.5" y2="5" stroke="#000" stroke-width="1"/><line x1="5.5" y1="0" x2="5.5" y2="5" stroke="#000" stroke-width="1"/><line x1="9.5" y1="0" x2="9.5" y2="5" stroke="#000" stroke-width="1"/><line x1="13.5" y1="0" x2="13.5" y2="5" stroke="#000" stroke-width="1"/></g><path d="M3.5 7 Q9 5 12.5 8 Q15 12 9.5 14.5 Q4.5 15.5 5 12 Q6.5 9.5 9 11.5 Q9.5 12.5 8 12.8" stroke="#000" fill="none" stroke-width="1" /></svg><svg class="ic" style="left:149px;top:4px" width="16" height="16" viewBox="0 0 16 16"><g transform="translate(1.5,-1) scale(.9)"><polygon points="9,3 11.5,0.5 15,2 15.5,6" fill="#ff0000"/><polygon points="9,3 15.5,6 14.5,10 8,12.5 5,11" fill="#b0b0b0" stroke="#000" stroke-width="1"/><polygon points="5,11 8,12.5 3,14.5" fill="#ff0000"/><path d="M9 3 L11.5 0.5 M15 2 L15.5 6" stroke="#000" fill="none" stroke-width=".8"/><path d="M10 5.5L8.5 10 M12.5 6.5L11 10.5" stroke="#fff" fill="none" stroke-width="1"/></g><g shape-rendering="crispEdges"><line x1="0" y1="13.5" x2="16" y2="13.5" stroke="#000" stroke-width="1"/><line x1="0.5" y1="11" x2="0.5" y2="16" stroke="#000" stroke-width="1"/><line x1="5.5" y1="11.5" x2="5.5" y2="15.5" stroke="#000" stroke-width="1"/><line x1="8.5" y1="11.5" x2="8.5" y2="15.5" stroke="#000" stroke-width="1"/><line x1="11.5" y1="11.5" x2="11.5" y2="15.5" stroke="#000" stroke-width="1"/><line x1="13.5" y1="11.5" x2="13.5" y2="15.5" stroke="#000" stroke-width="1"/></g></svg><svg class="ic" style="left:172px;top:4px" width="16" height="16" viewBox="0 0 16 16"><circle cx="8" cy="8.5" r="7" fill="none" stroke="#000" stroke-width="1.1"/><g shape-rendering="crispEdges"><line x1="1" y1="8.5" x2="15" y2="8.5" stroke="#000" stroke-width="1"/><line x1="3.5" y1="6.5" x2="3.5" y2="10.5" stroke="#000" stroke-width="1"/><line x1="5.5" y1="6.5" x2="5.5" y2="10.5" stroke="#000" stroke-width="1"/><line x1="7.5" y1="6.5" x2="7.5" y2="10.5" stroke="#000" stroke-width="1"/><line x1="9.5" y1="6.5" x2="9.5" y2="10.5" stroke="#000" stroke-width="1"/><line x1="11.5" y1="6.5" x2="11.5" y2="10.5" stroke="#000" stroke-width="1"/><line x1="13.5" y1="6.5" x2="13.5" y2="10.5" stroke="#000" stroke-width="1"/></g><line x1="10" y1="6" x2="15" y2="1" stroke="#000" stroke-width="1"/></svg><svg class="ic" style="left:195px;top:4px" width="16" height="16" viewBox="0 0 16 16"><g shape-rendering="crispEdges"><line x1="0" y1="7.5" x2="16" y2="7.5" stroke="#000" stroke-width="1"/><line x1="1.5" y1="2" x2="1.5" y2="14" stroke="#000" stroke-width="1"/><line x1="6.5" y1="2" x2="6.5" y2="14" stroke="#000" stroke-width="1"/><line x1="10.5" y1="2" x2="10.5" y2="14" stroke="#000" stroke-width="1"/><line x1="14.5" y1="2" x2="14.5" y2="14" stroke="#000" stroke-width="1"/></g></svg><svg class="ic" style="left:218px;top:4px" width="16" height="16" viewBox="0 0 16 16"><g shape-rendering="crispEdges"><line x1="0" y1="2.5" x2="16" y2="2.5" stroke="#000" stroke-width="1"/><line x1="1.5" y1="0" x2="1.5" y2="5" stroke="#000" stroke-width="1"/><line x1="5.5" y1="0" x2="5.5" y2="5" stroke="#000" stroke-width="1"/><line x1="9.5" y1="0" x2="9.5" y2="5" stroke="#000" stroke-width="1"/><line x1="13.5" y1="0" x2="13.5" y2="5" stroke="#000" stroke-width="1"/></g><text x="3" y="15" fill="#000" font-size="11" font-family="Liberation Sans,'Noto Sans CJK SC',sans-serif" font-weight="normal" >n</text><text x="9.5" y="11" fill="#000" font-size="8" font-family="Liberation Sans,'Noto Sans CJK SC',sans-serif" font-weight="normal" >2</text></svg><svg class="ic" style="left:241px;top:4px" width="16" height="16" viewBox="0 0 16 16"><g shape-rendering="crispEdges"><line x1="9.5" y1="1" x2="9.5" y2="15" stroke="#909090" stroke-width="1"/><line x1="12.5" y1="1" x2="12.5" y2="15" stroke="#909090" stroke-width="1"/></g><path d="M1 14.5 L8.5 2 L14 7.5 L1 14.5" stroke="#000" fill="none" stroke-width="0.9" /></svg><svg class="ic" style="left:264px;top:4px" width="16" height="16" viewBox="0 0 16 16"><g shape-rendering="crispEdges"><line x1="0" y1="9.5" x2="16" y2="9.5" stroke="#ff0000" stroke-width="1"/><line x1="7.5" y1="0" x2="7.5" y2="16" stroke="#ff0000" stroke-width="1"/><line x1="0" y1="9" x2="16" y2="9" stroke="#ff0000" stroke-width="1"/></g><path d="M15.5 5.5 Q12 0 6 1.5 Q0.5 4 2 10 Q4.5 15 9 12.5 Q11.5 10 9 7.5 Q7 6 5.5 8 Q5.5 10 7.5 10" stroke="#000" fill="none" stroke-width="1.2" /></svg><svg class="ic" style="left:287px;top:4px" width="16" height="16" viewBox="0 0 16 16"><circle cx="8.5" cy="8.5" r="6.5" fill="none" stroke="#a0a0a0" stroke-width=".8"/><circle cx="8.5" cy="8.5" r="4" fill="none" stroke="#a0a0a0" stroke-width=".8"/><g shape-rendering="crispEdges"><path d="M0 8.5H17 M8.5 0V17" stroke="#ff0000" fill="none" stroke-width="1" stroke-dasharray="2 1"/></g><path d="M3.5 3.5L13.5 13.5 M13.5 3.5L3.5 13.5" stroke="#008080" fill="none" stroke-width="0.9" stroke-dasharray="1.4 1"/><g shape-rendering="crispEdges"><rect x="7" y="7" width="3" height="3" fill="#ff0000"/></g><circle cx="2.5" cy="2.5" r=".7" fill="#008080"/><circle cx="14.5" cy="2.5" r=".7" fill="#008080"/><circle cx="2.5" cy="14.5" r=".7" fill="#008080"/><circle cx="14.5" cy="14.5" r=".7" fill="#008080"/></svg><svg class="ic" style="left:310px;top:4px" width="16" height="16" viewBox="0 0 16 16"><g shape-rendering="crispEdges"><rect x="2.5" y="2.5" width="12" height="12" fill="none" stroke="#909090"/><rect x="4.5" y="4.5" width="8" height="8" fill="none" stroke="#909090"/><rect x="6.5" y="6.5" width="4" height="4" fill="none" stroke="#909090"/><path d="M0 8.5H17 M8.5 0V17" stroke="#008080" fill="none" stroke-width="1" stroke-dasharray="2 1"/><rect x="1" y="1" width="1" height="1" fill="#ff0000"/><rect x="15" y="1" width="1" height="1" fill="#ff0000"/><rect x="1" y="15" width="1" height="1" fill="#ff0000"/><rect x="15" y="15" width="1" height="1" fill="#ff0000"/><rect x="4" y="4" width="1" height="1" fill="#ff0000"/><rect x="12" y="4" width="1" height="1" fill="#ff0000"/><rect x="4" y="12" width="1" height="1" fill="#ff0000"/><rect x="12" y="12" width="1" height="1" fill="#ff0000"/><rect x="8" y="1" width="1" height="1" fill="#ff0000"/><rect x="8" y="15" width="1" height="1" fill="#ff0000"/><rect x="1" y="8" width="1" height="1" fill="#ff0000"/><rect x="15" y="8" width="1" height="1" fill="#ff0000"/><rect x="7.5" y="7.5" width="2" height="2" fill="#ff0000"/></g></svg><svg class="ic" style="left:333px;top:4px" width="16" height="16" viewBox="0 0 16 16"><path d="M2.5 1.5V15 M2.5 11.5L9.5 3.5 M9.5 1.5V15" stroke="#000" fill="none" stroke-width="1.1" /><g shape-rendering="crispEdges"><line x1="12.5" y1="1" x2="12.5" y2="5" stroke="#000" stroke-width="1"/><line x1="15.5" y1="1" x2="15.5" y2="5" stroke="#000" stroke-width="1"/></g></svg><svg class="ic" style="left:356px;top:4px" width="16" height="16" viewBox="0 0 16 16"><g shape-rendering="crispEdges"><line x1="0" y1="2.5" x2="16" y2="2.5" stroke="#000" stroke-width="1"/><line x1="0.5" y1="0" x2="0.5" y2="6" stroke="#000" stroke-width="1"/><line x1="15.5" y1="0" x2="15.5" y2="6" stroke="#000" stroke-width="1"/><line x1="5.5" y1="0" x2="5.5" y2="4" stroke="#000" stroke-width="1"/><line x1="10.5" y1="0" x2="10.5" y2="4" stroke="#000" stroke-width="1"/></g><text x="8" y="15.6" fill="#ff0000" font-size="12" font-family="Noto Sans CJK SC,'Noto Sans CJK SC',sans-serif" font-weight="normal" text-anchor="middle">神</text></svg><svg class="ic" style="left:379px;top:4px" width="16" height="16" viewBox="0 0 16 16"><g shape-rendering="crispEdges"><line x1="0" y1="2.5" x2="16" y2="2.5" stroke="#000" stroke-width="1"/><line x1="0.5" y1="0" x2="0.5" y2="6" stroke="#000" stroke-width="1"/><line x1="15.5" y1="0" x2="15.5" y2="6" stroke="#000" stroke-width="1"/><line x1="5.5" y1="0" x2="5.5" y2="4" stroke="#000" stroke-width="1"/><line x1="10.5" y1="0" x2="10.5" y2="4" stroke="#000" stroke-width="1"/></g><text x="8" y="15.6" fill="#ff0000" font-size="12" font-family="Noto Sans CJK SC,'Noto Sans CJK SC',sans-serif" font-weight="normal" text-anchor="middle">赢</text></svg><svg class="ic" style="left:402px;top:4px" width="16" height="16" viewBox="0 0 16 16"><g shape-rendering="crispEdges"><rect x="2" y="1" width="13" height="2" fill="#000"/><line x1="2.5" y1="1" x2="2.5" y2="15" stroke="#000" stroke-width="1"/><line x1="0" y1="14.5" x2="4" y2="14.5" stroke="#000" stroke-width="1"/><line x1="4.5" y1="3" x2="4.5" y2="6" stroke="#000" stroke-width="1"/><line x1="6.5" y1="3" x2="6.5" y2="6" stroke="#000" stroke-width="1"/><line x1="8.5" y1="3" x2="8.5" y2="6" stroke="#000" stroke-width="1"/><line x1="10.5" y1="3" x2="10.5" y2="6" stroke="#000" stroke-width="1"/><line x1="12.5" y1="3" x2="12.5" y2="6" stroke="#000" stroke-width="1"/><line x1="14.5" y1="3" x2="14.5" y2="6" stroke="#000" stroke-width="1"/><line x1="3" y1="7.5" x2="15" y2="7.5" stroke="#000" stroke-width="1"/><line x1="4.5" y1="7" x2="4.5" y2="10" stroke="#000" stroke-width="1"/><line x1="6.5" y1="7" x2="6.5" y2="10" stroke="#000" stroke-width="1"/><line x1="8.5" y1="7" x2="8.5" y2="10" stroke="#000" stroke-width="1"/><line x1="10.5" y1="7" x2="10.5" y2="10" stroke="#000" stroke-width="1"/><line x1="12.5" y1="7" x2="12.5" y2="10" stroke="#000" stroke-width="1"/><line x1="14.5" y1="7" x2="14.5" y2="10" stroke="#000" stroke-width="1"/><rect x="5" y="12" width="2" height="3" fill="#000"/><rect x="9" y="12" width="2" height="3" fill="#000"/><rect x="13" y="12" width="2" height="3" fill="#000"/></g></svg><svg class="ic" style="left:425px;top:4px" width="16" height="16" viewBox="0 0 16 16"><g shape-rendering="crispEdges"><line x1="0.5" y1="2" x2="0.5" y2="13" stroke="#000" stroke-width="1"/><line x1="15.5" y1="2" x2="15.5" y2="13" stroke="#000" stroke-width="1"/><line x1="8.5" y1="0" x2="8.5" y2="16" stroke="#000" stroke-width="1"/><line x1="1" y1="7.5" x2="15" y2="7.5" stroke="#000" stroke-width="1"/></g><path d="M4 5.5L1.5 7.5L4 9.5Z M12 5.5L14.5 7.5L12 9.5Z" stroke="#000" fill="#000" stroke-width="1" /></svg><div class="sep" style="left:446px;top:0px;height:24px"></div><div class="grip" style="left:451px;top:3px;height:19px"></div><svg class="ic" style="left:458px;top:4px" width="16" height="16" viewBox="0 0 16 16"><g shape-rendering="crispEdges"><rect x="6" y="2" width="8" height="8" fill="none" stroke="#000" stroke-width="2"/><line x1="0" y1="1.5" x2="5" y2="1.5" stroke="#909090" stroke-width="1"/><line x1="0" y1="10.5" x2="5" y2="10.5" stroke="#909090" stroke-width="1"/><line x1="2.5" y1="2" x2="2.5" y2="10" stroke="#909090" stroke-width="1"/><line x1="5.5" y1="11" x2="5.5" y2="16" stroke="#909090" stroke-width="1"/><line x1="14.5" y1="11" x2="14.5" y2="16" stroke="#909090" stroke-width="1"/><line x1="6" y1="13.5" x2="14" y2="13.5" stroke="#909090" stroke-width="1"/></g></svg><svg class="ic" style="left:481px;top:4px" width="16" height="16" viewBox="0 0 16 16"><path d="M1.5 15 L4 0.5" stroke="#800000" fill="none" stroke-width="1" /><path d="M1.5 15L9 0.5 M1.5 15L15.5 7" stroke="#ff0000" fill="none" stroke-width="1" /><path d="M1.5 15L15 1" stroke="#000" fill="none" stroke-width="1" /><path d="M1.5 15L15.5 12" stroke="#800000" fill="none" stroke-width="1" /><rect x="0.5" y="14" width="2.5" height="2" fill="#800000"/></svg><svg class="ic" style="left:504px;top:4px" width="16" height="16" viewBox="0 0 16 16"><g shape-rendering="crispEdges"><rect x="1.5" y="3.5" width="11" height="11" fill="none" stroke="#000" stroke-width="1.6"/></g><path d="M1 15L4.5 0.5 M1 15L15.5 11.5" stroke="#800080" fill="none" stroke-width="0.9" /><path d="M1 15L9 0.5 M1 15L15.5 6" stroke="#800000" fill="none" stroke-width="0.9" /><path d="M1 15L15 1" stroke="#ff0000" fill="none" stroke-width="1.1" /></svg><svg class="ic" style="left:527px;top:4px" width="16" height="16" viewBox="0 0 16 16"><g shape-rendering="crispEdges"><rect x="1.5" y="1.5" width="11" height="11" fill="none" stroke="#000" stroke-width="1.6"/></g><path d="M1 1L5.5 15.5 M1 1L15.5 4.5" stroke="#800080" fill="none" stroke-width="0.9" /><path d="M1 1L10 15.5 M1 1L15.5 9.5" stroke="#800000" fill="none" stroke-width="0.9" /><path d="M1 1L15 15" stroke="#ff0000" fill="none" stroke-width="1.1" /></svg><svg class="ic" style="left:550px;top:4px" width="16" height="16" viewBox="0 0 16 16"><path d="M0.5 15.5L15.5 0.5 M0.5 15.5L15.5 8 M0.5 15.5L15.5 12" stroke="#000" fill="none" stroke-width="1" /><polygon points="0.5,15.5 4.5,12.5 5.5,14.5" fill="#000"/></svg><svg class="ic" style="left:573px;top:4px" width="16" height="16" viewBox="0 0 16 16"><path d="M1 1.5L7 14.5L11.5 6L15 10" stroke="#000" fill="none" stroke-width="1.1" /><g shape-rendering="crispEdges"><path d="M1 15.5H16" stroke="#606060" fill="none" stroke-width="1" stroke-dasharray="1 1"/></g></svg><svg class="ic" style="left:596px;top:4px" width="16" height="16" viewBox="0 0 16 16"><g shape-rendering="crispEdges"><rect x="1" y="1" width="14" height="14" fill="#fff"/><line x1="1.5" y1="1" x2="1.5" y2="15" stroke="#a8a8a8" stroke-width="1"/><line x1="4.5" y1="1" x2="4.5" y2="15" stroke="#a8a8a8" stroke-width="1"/><line x1="8.5" y1="1" x2="8.5" y2="15" stroke="#a8a8a8" stroke-width="1"/><line x1="11.5" y1="1" x2="11.5" y2="15" stroke="#a8a8a8" stroke-width="1"/><line x1="14.5" y1="1" x2="14.5" y2="15" stroke="#a8a8a8" stroke-width="1"/><line x1="1" y1="1.5" x2="15" y2="1.5" stroke="#a8a8a8" stroke-width="1"/><line x1="1" y1="4.5" x2="15" y2="4.5" stroke="#a8a8a8" stroke-width="1"/><line x1="1" y1="8.5" x2="15" y2="8.5" stroke="#a8a8a8" stroke-width="1"/><line x1="1" y1="11.5" x2="15" y2="11.5" stroke="#a8a8a8" stroke-width="1"/><line x1="1" y1="14.5" x2="15" y2="14.5" stroke="#a8a8a8" stroke-width="1"/><rect x="1" y="1" width="1" height="1" fill="#ff0000"/><rect x="1" y="4" width="1" height="1" fill="#ff0000"/><rect x="1" y="8" width="1" height="1" fill="#ff0000"/><rect x="1" y="11" width="1" height="1" fill="#ff0000"/><rect x="1" y="14" width="1" height="1" fill="#ff0000"/><rect x="4" y="1" width="1" height="1" fill="#ff0000"/><rect x="4" y="4" width="1" height="1" fill="#ff0000"/><rect x="4" y="8" width="1" height="1" fill="#ff0000"/><rect x="4" y="11" width="1" height="1" fill="#ff0000"/><rect x="4" y="14" width="1" height="1" fill="#ff0000"/><rect x="8" y="1" width="1" height="1" fill="#ff0000"/><rect x="8" y="4" width="1" height="1" fill="#ff0000"/><rect x="8" y="8" width="1" height="1" fill="#ff0000"/><rect x="8" y="11" width="1" height="1" fill="#ff0000"/><rect x="8" y="14" width="1" height="1" fill="#ff0000"/><rect x="11" y="1" width="1" height="1" fill="#ff0000"/><rect x="11" y="4" width="1" height="1" fill="#ff0000"/><rect x="11" y="8" width="1" height="1" fill="#ff0000"/><rect x="11" y="11" width="1" height="1" fill="#ff0000"/><rect x="11" y="14" width="1" height="1" fill="#ff0000"/><rect x="14" y="1" width="1" height="1" fill="#ff0000"/><rect x="14" y="4" width="1" height="1" fill="#ff0000"/><rect x="14" y="8" width="1" height="1" fill="#ff0000"/><rect x="14" y="11" width="1" height="1" fill="#ff0000"/><rect x="14" y="14" width="1" height="1" fill="#ff0000"/></g><circle cx="3" cy="3" r="1.5" fill="#fff" stroke="#808080" stroke-width=".7"/><circle cx="13" cy="3" r="1.5" fill="#fff" stroke="#808080" stroke-width=".7"/><circle cx="3" cy="13" r="1.5" fill="#fff" stroke="#808080" stroke-width=".7"/><circle cx="13" cy="13" r="1.5" fill="#fff" stroke="#808080" stroke-width=".7"/><circle cx="8.5" cy="8.5" r="2" fill="none" stroke="#808080" stroke-width=".7"/></svg><svg class="ic" style="left:619px;top:4px" width="16" height="16" viewBox="0 0 16 16"><g shape-rendering="crispEdges"><rect x="1" y="1" width="14" height="14" fill="#fff"/><line x1="1.5" y1="1" x2="1.5" y2="15" stroke="#a8a8a8" stroke-width="1"/><line x1="4.5" y1="1" x2="4.5" y2="15" stroke="#a8a8a8" stroke-width="1"/><line x1="8.5" y1="1" x2="8.5" y2="15" stroke="#a8a8a8" stroke-width="1"/><line x1="11.5" y1="1" x2="11.5" y2="15" stroke="#a8a8a8" stroke-width="1"/><line x1="14.5" y1="1" x2="14.5" y2="15" stroke="#a8a8a8" stroke-width="1"/><line x1="1" y1="1.5" x2="15" y2="1.5" stroke="#a8a8a8" stroke-width="1"/><line x1="1" y1="4.5" x2="15" y2="4.5" stroke="#a8a8a8" stroke-width="1"/><line x1="1" y1="8.5" x2="15" y2="8.5" stroke="#a8a8a8" stroke-width="1"/><line x1="1" y1="11.5" x2="15" y2="11.5" stroke="#a8a8a8" stroke-width="1"/><line x1="1" y1="14.5" x2="15" y2="14.5" stroke="#a8a8a8" stroke-width="1"/><rect x="1" y="1" width="1" height="1" fill="#ff0000"/><rect x="1" y="4" width="1" height="1" fill="#ff0000"/><rect x="1" y="8" width="1" height="1" fill="#ff0000"/><rect x="1" y="11" width="1" height="1" fill="#ff0000"/><rect x="1" y="14" width="1" height="1" fill="#ff0000"/><rect x="4" y="1" width="1" height="1" fill="#ff0000"/><rect x="4" y="4" width="1" height="1" fill="#ff0000"/><rect x="4" y="8" width="1" height="1" fill="#ff0000"/><rect x="4" y="11" width="1" height="1" fill="#ff0000"/><rect x="4" y="14" width="1" height="1" fill="#ff0000"/><rect x="8" y="1" width="1" height="1" fill="#ff0000"/><rect x="8" y="4" width="1" height="1" fill="#ff0000"/><rect x="8" y="8" width="1" height="1" fill="#ff0000"/><rect x="8" y="11" width="1" height="1" fill="#ff0000"/><rect x="8" y="14" width="1" height="1" fill="#ff0000"/><rect x="11" y="1" width="1" height="1" fill="#ff0000"/><rect x="11" y="4" width="1" height="1" fill="#ff0000"/><rect x="11" y="8" width="1" height="1" fill="#ff0000"/><rect x="11" y="11" width="1" height="1" fill="#ff0000"/><rect x="11" y="14" width="1" height="1" fill="#ff0000"/><rect x="14" y="1" width="1" height="1" fill="#ff0000"/><rect x="14" y="4" width="1" height="1" fill="#ff0000"/><rect x="14" y="8" width="1" height="1" fill="#ff0000"/><rect x="14" y="11" width="1" height="1" fill="#ff0000"/><rect x="14" y="14" width="1" height="1" fill="#ff0000"/></g><circle cx="3" cy="3" r="1.5" fill="#fff" stroke="#808080" stroke-width=".7"/><circle cx="13" cy="3" r="1.5" fill="#fff" stroke="#808080" stroke-width=".7"/><circle cx="3" cy="13" r="1.5" fill="#fff" stroke="#808080" stroke-width=".7"/><circle cx="13" cy="13" r="1.5" fill="#fff" stroke="#808080" stroke-width=".7"/><circle cx="8.5" cy="8.5" r="2" fill="none" stroke="#808080" stroke-width=".7"/><g shape-rendering="crispEdges"><line x1="1.5" y1="1" x2="1.5" y2="15" stroke="#000" stroke-width="1"/><line x1="1" y1="14.5" x2="15" y2="14.5" stroke="#000" stroke-width="1"/></g><polygon points="16,14.5 13,12.5 13,16.5" fill="#000"/><polygon points="1.5,-0.5 -0.5,3 3.5,3" fill="#000"/></svg><svg class="ic" style="left:642px;top:4px" width="16" height="16" viewBox="0 0 16 16"><g shape-rendering="crispEdges"><line x1="1.5" y1="1" x2="1.5" y2="16" stroke="#808080" stroke-width="1"/><line x1="12.5" y1="2" x2="12.5" y2="16" stroke="#808080" stroke-width="1"/></g><path d="M1.5 6.5L15.5 0.5 M1.5 11L15.5 5 M1.5 15.5L15.5 9.5" stroke="#000" fill="none" stroke-width="1" /></svg><div class="sep" style="left:664px;top:0px;height:24px"></div><div class="grip" style="left:669px;top:3px;height:19px"></div><svg class="ic" style="left:675px;top:4px" width="16" height="16" viewBox="0 0 16 16"><g shape-rendering="crispEdges"><rect x="1" y="1" width="2" height="14" fill="#000"/><line x1="3" y1="1.5" x2="9" y2="1.5" stroke="#000" stroke-width="1"/><line x1="3" y1="3.5" x2="9" y2="3.5" stroke="#000" stroke-width="1"/><line x1="3" y1="5.5" x2="9" y2="5.5" stroke="#000" stroke-width="1"/><line x1="3" y1="7.5" x2="9" y2="7.5" stroke="#000" stroke-width="1"/><line x1="3" y1="9.5" x2="9" y2="9.5" stroke="#000" stroke-width="1"/><line x1="3" y1="11.5" x2="9" y2="11.5" stroke="#000" stroke-width="1"/><line x1="3" y1="13.5" x2="9" y2="13.5" stroke="#000" stroke-width="1"/><rect x="10" y="2" width="1" height="1" fill="#000"/><rect x="10" y="3" width="1" height="1" fill="#000"/><rect x="10" y="6" width="1" height="1" fill="#000"/><rect x="10" y="7" width="1" height="1" fill="#000"/><rect x="10" y="10" width="1" height="1" fill="#000"/><rect x="10" y="11" width="1" height="1" fill="#000"/><rect x="12" y="2" width="1" height="1" fill="#000"/><rect x="12" y="3" width="1" height="1" fill="#000"/><rect x="12" y="6" width="1" height="1" fill="#000"/><rect x="12" y="7" width="1" height="1" fill="#000"/><rect x="12" y="10" width="1" height="1" fill="#000"/><rect x="12" y="11" width="1" height="1" fill="#000"/><rect x="14" y="2" width="1" height="1" fill="#000"/><rect x="14" y="3" width="1" height="1" fill="#000"/><rect x="14" y="6" width="1" height="1" fill="#000"/><rect x="14" y="7" width="1" height="1" fill="#000"/><rect x="14" y="10" width="1" height="1" fill="#000"/><rect x="14" y="11" width="1" height="1" fill="#000"/><line x1="1" y1="14.5" x2="16" y2="14.5" stroke="#000" stroke-width="1"/><rect x="13" y="13" width="2" height="1" fill="#000"/></g></svg><svg class="ic" style="left:698px;top:4px" width="16" height="16" viewBox="0 0 16 16"><g shape-rendering="crispEdges"><line x1="0" y1="1.5" x2="16" y2="1.5" stroke="#ff0000" stroke-width="1.4"/><line x1="0" y1="15.5" x2="6" y2="15.5" stroke="#ff0000" stroke-width="1.4"/><line x1="9" y1="7.5" x2="16" y2="7.5" stroke="#ff0000" stroke-width="1"/></g><path d="M2.5 15L8.5 2L12.5 7L16 3" stroke="#000" fill="none" stroke-width="1.1" /><text x="7" y="15.5" fill="#ff0000" font-size="10" font-family="Liberation Sans,'Noto Sans CJK SC',sans-serif" font-weight="normal" >%</text></svg><svg class="ic" style="left:721px;top:4px" width="16" height="16" viewBox="0 0 16 16"><text x="8" y="14" fill="#000" font-size="15" font-family="Liberation Sans,'Noto Sans CJK SC',sans-serif" font-weight="normal" text-anchor="middle">%</text></svg><svg class="ic" style="left:744px;top:4px" width="16" height="16" viewBox="0 0 16 16"><g shape-rendering="crispEdges"><line x1="0" y1="1.5" x2="16" y2="1.5" stroke="#000" stroke-width="1.4"/><line x1="7" y1="5.5" x2="16" y2="5.5" stroke="#000" stroke-width="1.4"/><line x1="9" y1="9.5" x2="16" y2="9.5" stroke="#000" stroke-width="1.4"/><line x1="0" y1="15.5" x2="16" y2="15.5" stroke="#000" stroke-width="1.4"/></g><text x="0" y="13.5" fill="#ff0000" font-size="10" font-family="Liberation Sans,'Noto Sans CJK SC',sans-serif" font-weight="normal" >%</text></svg><svg class="ic" style="left:767px;top:4px" width="16" height="16" viewBox="0 0 16 16"><circle cx="8" cy="8.5" r="7.3" fill="#f4f4f4" stroke="#909090" stroke-width="1"/><text x="8" y="12.5" fill="#808000" font-size="10.5" font-family="Noto Sans CJK SC,'Noto Sans CJK SC',sans-serif" font-weight="500" text-anchor="middle">金</text></svg><svg class="ic" style="left:790px;top:4px" width="16" height="16" viewBox="0 0 16 16"><g shape-rendering="crispEdges"><line x1="0" y1="1.5" x2="16" y2="1.5" stroke="#000" stroke-width="1.4"/><line x1="9" y1="5.5" x2="16" y2="5.5" stroke="#000" stroke-width="1.4"/><line x1="10" y1="10.5" x2="16" y2="10.5" stroke="#000" stroke-width="1.4"/><line x1="0" y1="15.5" x2="16" y2="15.5" stroke="#000" stroke-width="1.4"/></g><text x="-0.5" y="13.5" fill="#808000" font-size="10" font-family="Noto Sans CJK SC,'Noto Sans CJK SC',sans-serif" font-weight="500" >金</text></svg><svg class="ic" style="left:813px;top:4px" width="16" height="16" viewBox="0 0 16 16"><g shape-rendering="crispEdges"><line x1="2.5" y1="1" x2="2.5" y2="16" stroke="#000" stroke-width="1"/><line x1="0" y1="15.5" x2="6" y2="15.5" stroke="#000" stroke-width="1"/><line x1="0" y1="3.5" x2="5" y2="3.5" stroke="#000" stroke-width="1"/><line x1="0" y1="6.5" x2="5" y2="6.5" stroke="#000" stroke-width="1"/><line x1="0" y1="9.5" x2="5" y2="9.5" stroke="#000" stroke-width="1"/></g><g transform="translate(3.5,1) scale(.82)"><polygon points="9,3 11.5,0.5 15,2 15.5,6" fill="#ff0000"/><polygon points="9,3 15.5,6 14.5,10 8,12.5 5,11" fill="#b0b0b0" stroke="#000" stroke-width="1"/><polygon points="5,11 8,12.5 3,14.5" fill="#ff0000"/><path d="M9 3 L11.5 0.5 M15 2 L15.5 6" stroke="#000" fill="none" stroke-width=".8"/><path d="M10 5.5L8.5 10 M12.5 6.5L11 10.5" stroke="#fff" fill="none" stroke-width="1"/></g></svg><svg class="ic" style="left:836px;top:4px" width="16" height="16" viewBox="0 0 16 16"><g shape-rendering="crispEdges"><line x1="0" y1="1.5" x2="16" y2="1.5" stroke="#ff0000" stroke-width="1.4"/><line x1="0" y1="15.5" x2="16" y2="15.5" stroke="#ff0000" stroke-width="1.4"/><line x1="0" y1="8.5" x2="16" y2="8.5" stroke="#000" stroke-width="1"/></g><path d="M0.5 14 Q2.5 -2 6 6 Q9 17 12 10 Q14 4 16 3" stroke="#808080" fill="none" stroke-width="1.1" /></svg><svg class="ic" style="left:859px;top:4px" width="16" height="16" viewBox="0 0 16 16"><g shape-rendering="crispEdges"><line x1="0" y1="1.5" x2="16" y2="1.5" stroke="#ff0000" stroke-width="1.4"/><line x1="0" y1="15.5" x2="16" y2="15.5" stroke="#ff0000" stroke-width="1.4"/></g><text x="8" y="13" fill="#808000" font-size="10.5" font-family="Noto Sans CJK SC,'Noto Sans CJK SC',sans-serif" font-weight="500" text-anchor="middle">金</text></svg><svg class="ic" style="left:882px;top:4px" width="16" height="16" viewBox="0 0 16 16"><path d="M0.5 15.5L15.5 0.5" stroke="#000" fill="none" stroke-width="1.1" /><g shape-rendering="crispEdges"><line x1="7" y1="9.5" x2="16" y2="9.5" stroke="#000" stroke-width="1"/><line x1="4" y1="12.5" x2="16" y2="12.5" stroke="#000" stroke-width="1"/><line x1="1" y1="15.5" x2="16" y2="15.5" stroke="#000" stroke-width="1"/><line x1="10" y1="6.5" x2="15" y2="6.5" stroke="#000" stroke-width="1"/></g><path d="M5 1V6.5Q5 8.5 3 8.5Q1.5 8.5 1.2 7" stroke="#ff0000" fill="none" stroke-width="1.5" /></svg><svg class="ic" style="left:905px;top:4px" width="16" height="16" viewBox="0 0 16 16"><path d="M0.5 15.5L15.5 0.5" stroke="#000" fill="none" stroke-width="1.1" /><g shape-rendering="crispEdges"><line x1="7" y1="9.5" x2="16" y2="9.5" stroke="#000" stroke-width="1"/><line x1="4" y1="12.5" x2="16" y2="12.5" stroke="#000" stroke-width="1"/><line x1="1" y1="15.5" x2="16" y2="15.5" stroke="#000" stroke-width="1"/><line x1="10" y1="6.5" x2="15" y2="6.5" stroke="#000" stroke-width="1"/></g><g shape-rendering="crispEdges"><path d="M2 10V1.5H7 M2 5.5H6" stroke="#ff0000" fill="none" stroke-width="1.8" /></g></svg><svg class="ic" style="left:928px;top:4px" width="16" height="16" viewBox="0 0 16 16"><text x="-0.5" y="10" fill="#808000" font-size="10.5" font-family="Noto Sans CJK SC,'Noto Sans CJK SC',sans-serif" font-weight="normal" >金</text><path d="M0.5 15.5L15.5 0.5" stroke="#000" fill="none" stroke-width="1.1" /><g shape-rendering="crispEdges"><line x1="7" y1="9.5" x2="16" y2="9.5" stroke="#000" stroke-width="1"/><line x1="4" y1="12.5" x2="16" y2="12.5" stroke="#000" stroke-width="1"/><line x1="1" y1="15.5" x2="16" y2="15.5" stroke="#000" stroke-width="1"/><line x1="10" y1="6.5" x2="15" y2="6.5" stroke="#000" stroke-width="1"/></g></svg><svg class="ic" style="left:951px;top:4px" width="16" height="16" viewBox="0 0 16 16"><text x="-1" y="10.5" fill="#ff0000" font-size="12" font-family="Noto Sans CJK SC,'Noto Sans CJK SC',sans-serif" font-weight="normal" >神</text><path d="M0.5 15.5L15.5 0.5" stroke="#000" fill="none" stroke-width="1.1" /><g shape-rendering="crispEdges"><line x1="7" y1="9.5" x2="16" y2="9.5" stroke="#000" stroke-width="1"/><line x1="4" y1="12.5" x2="16" y2="12.5" stroke="#000" stroke-width="1"/><line x1="1" y1="15.5" x2="16" y2="15.5" stroke="#000" stroke-width="1"/><line x1="10" y1="6.5" x2="15" y2="6.5" stroke="#000" stroke-width="1"/></g></svg><svg class="ic" style="left:974px;top:4px" width="16" height="16" viewBox="0 0 16 16"><text x="-1" y="10.5" fill="#ff0000" font-size="12" font-family="Noto Sans CJK SC,'Noto Sans CJK SC',sans-serif" font-weight="normal" >赢</text><path d="M0.5 15.5L15.5 0.5" stroke="#000" fill="none" stroke-width="1.1" /><g shape-rendering="crispEdges"><line x1="7" y1="9.5" x2="16" y2="9.5" stroke="#000" stroke-width="1"/><line x1="4" y1="12.5" x2="16" y2="12.5" stroke="#000" stroke-width="1"/><line x1="1" y1="15.5" x2="16" y2="15.5" stroke="#000" stroke-width="1"/><line x1="10" y1="6.5" x2="15" y2="6.5" stroke="#000" stroke-width="1"/></g></svg><svg class="ic" style="left:997px;top:4px" width="16" height="16" viewBox="0 0 16 16"><text x="-1" y="10" fill="#ff0000" font-size="11.5" font-family="Noto Sans CJK SC,'Noto Sans CJK SC',sans-serif" font-weight="normal" >四</text><path d="M0.5 15.5L15.5 0.5" stroke="#000" fill="none" stroke-width="1.1" /><g shape-rendering="crispEdges"><line x1="7" y1="9.5" x2="16" y2="9.5" stroke="#000" stroke-width="1"/><line x1="4" y1="12.5" x2="16" y2="12.5" stroke="#000" stroke-width="1"/><line x1="1" y1="15.5" x2="16" y2="15.5" stroke="#000" stroke-width="1"/><line x1="10" y1="6.5" x2="15" y2="6.5" stroke="#000" stroke-width="1"/></g></svg></div>
<div style="position:absolute;left:0;top:22px;width:1px;height:26px;background:#fff"></div><div style="position:absolute;left:0;top:49px;width:1px;height:26px;background:#fff"></div><div style="position:absolute;left:0;top:76px;width:1px;height:25px;background:#fff"></div><div style="position:absolute;left:0;top:102px;width:1px;height:25px;background:#fff"></div>
<svg width="1237" height="557" viewBox="0 128 1237 557" style="position:absolute;left:0;top:128px" shape-rendering="crispEdges"><rect x="70" y="141" width="1167" height="1" fill="#a0a0a0"/>
<text x="71" y="139" class="dt" dy="0.5" textLength="22.5" lengthAdjust="spacingAndGlyphs">05-06</text>
<text x="130" y="139" class="dt" dy="0.5" textLength="22.5" lengthAdjust="spacingAndGlyphs">05-20</text>
<text x="199" y="139" class="dt" dy="0.5" textLength="22.5" lengthAdjust="spacingAndGlyphs">06-04</text>
<text x="269" y="139" class="dt" dy="0.5" textLength="22.5" lengthAdjust="spacingAndGlyphs">06-18</text>
<text x="339" y="139" class="dt" dy="0.5" textLength="22.5" lengthAdjust="spacingAndGlyphs">07-02</text>
<text x="409" y="139" class="dt" dy="0.5" textLength="22.5" lengthAdjust="spacingAndGlyphs">07-16</text>
<text x="479" y="139" class="dt" dy="0.5" textLength="22.5" lengthAdjust="spacingAndGlyphs">07-30</text>
<text x="549" y="139" class="dt" dy="0.5" textLength="22.5" lengthAdjust="spacingAndGlyphs">08-13</text>
<text x="619" y="139" class="dt" dy="0.5" textLength="22.5" lengthAdjust="spacingAndGlyphs">08-27</text>
<text x="689" y="139" class="dt" dy="0.5" textLength="22.5" lengthAdjust="spacingAndGlyphs">09-11</text>
<text x="759" y="139" class="dt" dy="0.5" textLength="22.5" lengthAdjust="spacingAndGlyphs">09-25</text>
<text x="829" y="139" class="dt" dy="0.5" textLength="22.5" lengthAdjust="spacingAndGlyphs">10-16</text>
<text x="899" y="139" class="dt" dy="0.5" textLength="22.5" lengthAdjust="spacingAndGlyphs">10-30</text>
<text x="969" y="139" class="dt" dy="0.5" textLength="22.5" lengthAdjust="spacingAndGlyphs">11-13</text>
<text x="1039" y="139" class="dt" dy="0.5" textLength="22.5" lengthAdjust="spacingAndGlyphs">11-27</text>
<text x="1109" y="139" class="dt" dy="0.5" textLength="22.5" lengthAdjust="spacingAndGlyphs">12-11</text>
<text x="1179" y="139" class="dt" dy="0.5" textLength="22.5" lengthAdjust="spacingAndGlyphs">12-25</text>
<text x="3" y="146" class="ss" fill="#0000ff">日K线</text>
<text x="1140" y="155" class="ss" fill="#0000ff" style="font-size:13px"><tspan class="mono" style="font-size:13px;letter-spacing:-1.3px">1A0001</tspan><tspan dx="9">上证指数</tspan></text>
<rect x="70" y="164" width="1164" height="1" fill="#808080"/>
<rect x="70" y="174" width="1164" height="1" fill="#000080"/>
<rect x="70" y="203" width="1164" height="1" fill="#800080"/>
<rect x="70" y="233" width="1164" height="1" fill="#008080"/>
<rect x="70" y="243" width="1164" height="1" fill="#0000ff"/>
<rect x="70" y="322" width="1164" height="1" fill="#ff0000"/>
<rect x="70" y="401" width="1164" height="1" fill="#808080"/>
<rect x="70" y="411" width="1164" height="1" fill="#000080"/>
<rect x="70" y="441" width="1164" height="1" fill="#800080"/>
<rect x="70" y="470" width="1164" height="1" fill="#008080"/>
<rect x="70" y="480" width="1164" height="1" fill="#0000ff"/>
<rect x="1152" y="160" width="85" height="11" fill="#fff"/>
<text x="1152.2" y="169" class="vd" fill="#808080" textLength="81.8" lengthAdjust="spacing">166.67%(240)</text>
<rect x="1159" y="170" width="78" height="11" fill="#fff"/>
<text x="1159.2" y="179" class="vd" fill="#000080" stroke="#000080" stroke-width="0.25" textLength="74.8" lengthAdjust="spacing">162.5%(225)</text>
<rect x="1159" y="199" width="78" height="11" fill="#fff"/>
<text x="1159.2" y="208" class="vd" fill="#800080" stroke="#800080" stroke-width="0.25" textLength="74.8" lengthAdjust="spacing">150.0%(180)</text>
<rect x="1159" y="229" width="78" height="11" fill="#fff"/>
<text x="1159.2" y="238" class="vd" fill="#008080" textLength="74.8" lengthAdjust="spacing">137.5%(135)</text>
<rect x="1152" y="239" width="85" height="11" fill="#fff"/>
<text x="1152.2" y="248" class="vd" fill="#0000ff" stroke="#0000ff" stroke-width="0.25" textLength="81.8" lengthAdjust="spacing">133.33%(120)</text>
<rect x="1173" y="318" width="64" height="11" fill="#fff"/>
<text x="1173.2" y="327" class="vd" fill="#ff0000" stroke="#ff0000" stroke-width="0.12" textLength="60.8" lengthAdjust="spacing">100.0%(0)</text>
<rect x="1159" y="397" width="78" height="11" fill="#fff"/>
<text x="1159.2" y="406" class="vd" fill="#808080" textLength="74.8" lengthAdjust="spacing">66.67%(240)</text>
<rect x="1166" y="407" width="71" height="11" fill="#fff"/>
<text x="1166.2" y="416" class="vd" fill="#000080" stroke="#000080" stroke-width="0.25" textLength="67.8" lengthAdjust="spacing">62.5%(225)</text>
<rect x="1166" y="437" width="71" height="11" fill="#fff"/>
<text x="1166.2" y="446" class="vd" fill="#800080" stroke="#800080" stroke-width="0.25" textLength="67.8" lengthAdjust="spacing">50.0%(180)</text>
<rect x="1166" y="466" width="71" height="11" fill="#fff"/>
<text x="1166.2" y="475" class="vd" fill="#008080" textLength="67.8" lengthAdjust="spacing">37.5%(135)</text>
<rect x="1159" y="476" width="78" height="11" fill="#fff"/>
<text x="1159.2" y="485" class="vd" fill="#0000ff" stroke="#0000ff" stroke-width="0.25" textLength="74.8" lengthAdjust="spacing">33.33%(120)</text>
<rect x="1018" y="193" width="59" height="10" fill="#fff"/>
<text x="1018" y="203" class="vd" fill="#0000ff">2508.7700</text>
<polyline points="997.5,187.5 1001.5,187.5 1005.5,188.5 1009.5,189.5 1013.5,190.5 1016.5,192.5" fill="none" stroke="#0000ff"/>
<line x1="1029" y1="200.5" x2="1160" y2="200.5" stroke="#808080" stroke-width="1" stroke-dasharray="4 3"/>
<rect x="171" y="467" width="58" height="12" fill="#fff"/>
<text x="171" y="477" class="vd" fill="#0000ff">1991.0601</text>
<polyline points="150.5,479.5 160.5,476.5 170.5,474.5" fill="none" stroke="#0000ff"/>
<rect x="284" y="159" width="1" height="365" fill="#0000ff"/>
<rect x="285" y="168" width="32" height="13" fill="#fff"/>
<text x="285.5" y="179" class="mono" fill="#0000ff">1.382</text>
<rect x="285" y="469" width="20" height="13" fill="#fff"/>
<text x="286" y="479" class="ar" fill="#0000ff">239</text>
<rect x="427" y="159" width="1" height="365" fill="#008080"/>
<rect x="428" y="168" width="20" height="13" fill="#fff"/>
<text x="428.5" y="179" class="mono" fill="#008080">1.5</text>
<rect x="428" y="469" width="20" height="13" fill="#fff"/>
<text x="429" y="479" class="ar" fill="#008080">260</text>
<rect x="569" y="159" width="1" height="365" fill="#800080"/>
<rect x="570" y="168" width="32" height="13" fill="#fff"/>
<text x="570.5" y="179" class="mono" fill="#800080">1.618</text>
<rect x="570" y="469" width="20" height="13" fill="#fff"/>
<text x="571" y="479" class="ar" fill="#800080">280</text>
<rect x="1032" y="159" width="1" height="365" fill="#ff0000"/>
<rect x="1033" y="168" width="8" height="13" fill="#fff"/>
<text x="1033.5" y="179" class="mono" fill="#ff0000">2</text>
<rect x="1033" y="469" width="20" height="13" fill="#fff"/>
<text x="1034" y="479" class="ar" fill="#ff0000">346</text>
<line x1="70" y1="524.5" x2="1237" y2="524.5" stroke="#a0a0a0" stroke-width="1" stroke-dasharray="3 3"/>
<line x1="70" y1="542.5" x2="1237" y2="542.5" stroke="#a0a0a0" stroke-width="1" stroke-dasharray="3 3"/>
<line x1="70" y1="558.5" x2="1237" y2="558.5" stroke="#a0a0a0" stroke-width="1" stroke-dasharray="3 3"/>
<line x1="70" y1="574.5" x2="1237" y2="574.5" stroke="#a0a0a0" stroke-width="1" stroke-dasharray="3 3"/>
<rect x="70" y="559" width="1118" height="1" fill="#ff0000"/>
<text x="68" y="522" class="mono" text-anchor="end" fill="#484848">1911.4177</text>
<text x="68" y="546" class="mono" text-anchor="end" fill="#484848">299566603</text>
<text x="68" y="562" class="mono" text-anchor="end" fill="#484848">199711068</text>
<text x="68" y="578" class="mono" text-anchor="end" fill="#484848">99855534</text>
<polygon points="801.5,523.5 805.5,528 797.5,528" fill="#000"/>
<rect x="73" y="452" width="1" height="10" fill="#ff0000"/>
<rect x="70" y="458" width="6" height="2" fill="#ff0000"/>
<rect x="80" y="461" width="1" height="9" fill="#008000"/>
<rect x="77" y="461" width="6" height="8" fill="#008000"/>
<rect x="87" y="453" width="1" height="12" fill="#ff0000"/>
<rect x="87" y="471" width="1" height="1" fill="#ff0000"/>
<rect x="84" y="465" width="6" height="1" fill="#ff0000"/>
<rect x="84" y="470" width="6" height="1" fill="#ff0000"/>
<rect x="84" y="465" width="1" height="6" fill="#ff0000"/>
<rect x="89" y="465" width="1" height="6" fill="#ff0000"/>
<rect x="94" y="464" width="1" height="9" fill="#008000"/>
<rect x="91" y="465" width="6" height="4" fill="#008000"/>
<rect x="101" y="443" width="1" height="1" fill="#ff0000"/>
<rect x="101" y="461" width="1" height="4" fill="#ff0000"/>
<rect x="98" y="444" width="6" height="1" fill="#ff0000"/>
<rect x="98" y="460" width="6" height="1" fill="#ff0000"/>
<rect x="98" y="444" width="1" height="17" fill="#ff0000"/>
<rect x="103" y="444" width="1" height="17" fill="#ff0000"/>
<rect x="108" y="441" width="1" height="9" fill="#008000"/>
<rect x="105" y="443" width="6" height="2" fill="#008000"/>
<rect x="115" y="443" width="1" height="7" fill="#008000"/>
<rect x="112" y="446" width="6" height="1" fill="#008000"/>
<rect x="122" y="448" width="1" height="13" fill="#008000"/>
<rect x="119" y="449" width="6" height="11" fill="#008000"/>
<rect x="129" y="458" width="1" height="9" fill="#ff0000"/>
<rect x="126" y="459" width="6" height="2" fill="#ff0000"/>
<rect x="136" y="461" width="1" height="15" fill="#008000"/>
<rect x="133" y="461" width="6" height="10" fill="#008000"/>
<rect x="143" y="465" width="1" height="8" fill="#008000"/>
<rect x="140" y="467" width="6" height="2" fill="#008000"/>
<rect x="150" y="473" width="1" height="8" fill="#ff0000"/>
<rect x="147" y="460" width="6" height="1" fill="#ff0000"/>
<rect x="147" y="472" width="6" height="1" fill="#ff0000"/>
<rect x="147" y="460" width="1" height="13" fill="#ff0000"/>
<rect x="152" y="460" width="1" height="13" fill="#ff0000"/>
<rect x="157" y="451" width="1" height="12" fill="#008000"/>
<rect x="154" y="461" width="6" height="2" fill="#008000"/>
<rect x="164" y="463" width="1" height="1" fill="#ff0000"/>
<rect x="161" y="455" width="6" height="1" fill="#ff0000"/>
<rect x="161" y="462" width="6" height="1" fill="#ff0000"/>
<rect x="161" y="455" width="1" height="8" fill="#ff0000"/>
<rect x="166" y="455" width="1" height="8" fill="#ff0000"/>
<rect x="171" y="449" width="1" height="5" fill="#008000"/>
<rect x="168" y="450" width="6" height="1" fill="#008000"/>
<rect x="178" y="450" width="1" height="6" fill="#008000"/>
<rect x="175" y="452" width="6" height="3" fill="#008000"/>
<rect x="185" y="444" width="1" height="2" fill="#ff0000"/>
<rect x="185" y="455" width="1" height="3" fill="#ff0000"/>
<rect x="182" y="446" width="6" height="1" fill="#ff0000"/>
<rect x="182" y="454" width="6" height="1" fill="#ff0000"/>
<rect x="182" y="446" width="1" height="9" fill="#ff0000"/>
<rect x="187" y="446" width="1" height="9" fill="#ff0000"/>
<rect x="192" y="443" width="1" height="9" fill="#008000"/>
<rect x="189" y="445" width="6" height="6" fill="#008000"/>
<rect x="199" y="449" width="1" height="7" fill="#008000"/>
<rect x="196" y="451" width="6" height="1" fill="#008000"/>
<rect x="206" y="447" width="1" height="6" fill="#008000"/>
<rect x="203" y="452" width="6" height="1" fill="#008000"/>
<rect x="213" y="453" width="1" height="14" fill="#008000"/>
<rect x="210" y="453" width="6" height="7" fill="#008000"/>
<rect x="220" y="463" width="1" height="2" fill="#ff0000"/>
<rect x="217" y="451" width="6" height="1" fill="#ff0000"/>
<rect x="217" y="462" width="6" height="1" fill="#ff0000"/>
<rect x="217" y="451" width="1" height="12" fill="#ff0000"/>
<rect x="222" y="451" width="1" height="12" fill="#ff0000"/>
<rect x="227" y="451" width="1" height="11" fill="#008000"/>
<rect x="224" y="451" width="6" height="6" fill="#008000"/>
<rect x="234" y="449" width="1" height="8" fill="#ff0000"/>
<rect x="234" y="460" width="1" height="1" fill="#ff0000"/>
<rect x="231" y="457" width="6" height="1" fill="#ff0000"/>
<rect x="231" y="459" width="6" height="1" fill="#ff0000"/>
<rect x="231" y="457" width="1" height="3" fill="#ff0000"/>
<rect x="236" y="457" width="1" height="3" fill="#ff0000"/>
<rect x="241" y="455" width="1" height="4" fill="#ff0000"/>
<rect x="238" y="444" width="6" height="1" fill="#ff0000"/>
<rect x="238" y="454" width="6" height="1" fill="#ff0000"/>
<rect x="238" y="444" width="1" height="11" fill="#ff0000"/>
<rect x="243" y="444" width="1" height="11" fill="#ff0000"/>
<rect x="248" y="442" width="1" height="1" fill="#ff0000"/>
<rect x="248" y="446" width="1" height="2" fill="#ff0000"/>
<rect x="245" y="443" width="6" height="1" fill="#ff0000"/>
<rect x="245" y="445" width="6" height="1" fill="#ff0000"/>
<rect x="245" y="443" width="1" height="3" fill="#ff0000"/>
<rect x="250" y="443" width="1" height="3" fill="#ff0000"/>
<rect x="255" y="442" width="1" height="6" fill="#ff0000"/>
<rect x="252" y="445" width="6" height="1" fill="#ff0000"/>
<rect x="262" y="433" width="1" height="1" fill="#ff0000"/>
<rect x="262" y="446" width="1" height="1" fill="#ff0000"/>
<rect x="259" y="434" width="6" height="1" fill="#ff0000"/>
<rect x="259" y="445" width="6" height="1" fill="#ff0000"/>
<rect x="259" y="434" width="1" height="12" fill="#ff0000"/>
<rect x="264" y="434" width="1" height="12" fill="#ff0000"/>
<rect x="269" y="425" width="1" height="1" fill="#ff0000"/>
<rect x="269" y="434" width="1" height="1" fill="#ff0000"/>
<rect x="266" y="426" width="6" height="1" fill="#ff0000"/>
<rect x="266" y="433" width="6" height="1" fill="#ff0000"/>
<rect x="266" y="426" width="1" height="8" fill="#ff0000"/>
<rect x="271" y="426" width="1" height="8" fill="#ff0000"/>
<rect x="276" y="429" width="1" height="9" fill="#008000"/>
<rect x="273" y="429" width="6" height="7" fill="#008000"/>
<rect x="283" y="437" width="1" height="8" fill="#008000"/>
<rect x="280" y="438" width="6" height="5" fill="#008000"/>
<rect x="290" y="442" width="1" height="22" fill="#008000"/>
<rect x="287" y="443" width="6" height="18" fill="#008000"/>
<rect x="297" y="467" width="1" height="1" fill="#ff0000"/>
<rect x="294" y="459" width="6" height="1" fill="#ff0000"/>
<rect x="294" y="466" width="6" height="1" fill="#ff0000"/>
<rect x="294" y="459" width="1" height="8" fill="#ff0000"/>
<rect x="299" y="459" width="1" height="8" fill="#ff0000"/>
<rect x="304" y="456" width="1" height="5" fill="#008000"/>
<rect x="301" y="458" width="6" height="1" fill="#008000"/>
<rect x="311" y="461" width="1" height="1" fill="#ff0000"/>
<rect x="308" y="455" width="6" height="1" fill="#ff0000"/>
<rect x="308" y="460" width="6" height="1" fill="#ff0000"/>
<rect x="308" y="455" width="1" height="6" fill="#ff0000"/>
<rect x="313" y="455" width="1" height="6" fill="#ff0000"/>
<rect x="318" y="457" width="1" height="7" fill="#008000"/>
<rect x="315" y="457" width="6" height="3" fill="#008000"/>
<rect x="325" y="451" width="1" height="1" fill="#ff0000"/>
<rect x="322" y="452" width="6" height="1" fill="#ff0000"/>
<rect x="322" y="459" width="6" height="1" fill="#ff0000"/>
<rect x="322" y="452" width="1" height="8" fill="#ff0000"/>
<rect x="327" y="452" width="1" height="8" fill="#ff0000"/>
<rect x="332" y="449" width="1" height="4" fill="#ff0000"/>
<rect x="332" y="456" width="1" height="4" fill="#ff0000"/>
<rect x="329" y="453" width="6" height="1" fill="#ff0000"/>
<rect x="329" y="455" width="6" height="1" fill="#ff0000"/>
<rect x="329" y="453" width="1" height="3" fill="#ff0000"/>
<rect x="334" y="453" width="1" height="3" fill="#ff0000"/>
<rect x="339" y="445" width="1" height="2" fill="#ff0000"/>
<rect x="336" y="447" width="6" height="1" fill="#ff0000"/>
<rect x="336" y="451" width="6" height="1" fill="#ff0000"/>
<rect x="336" y="447" width="1" height="5" fill="#ff0000"/>
<rect x="341" y="447" width="1" height="5" fill="#ff0000"/>
<rect x="346" y="445" width="1" height="5" fill="#008000"/>
<rect x="343" y="445" width="6" height="1" fill="#008000"/>
<rect x="353" y="440" width="1" height="1" fill="#ff0000"/>
<rect x="353" y="446" width="1" height="3" fill="#ff0000"/>
<rect x="350" y="441" width="6" height="1" fill="#ff0000"/>
<rect x="350" y="445" width="6" height="1" fill="#ff0000"/>
<rect x="350" y="441" width="1" height="5" fill="#ff0000"/>
<rect x="355" y="441" width="1" height="5" fill="#ff0000"/>
<rect x="360" y="437" width="1" height="1" fill="#ff0000"/>
<rect x="360" y="445" width="1" height="2" fill="#ff0000"/>
<rect x="357" y="438" width="6" height="1" fill="#ff0000"/>
<rect x="357" y="444" width="6" height="1" fill="#ff0000"/>
<rect x="357" y="438" width="1" height="7" fill="#ff0000"/>
<rect x="362" y="438" width="1" height="7" fill="#ff0000"/>
<rect x="367" y="438" width="1" height="6" fill="#008000"/>
<rect x="364" y="439" width="6" height="2" fill="#008000"/>
<rect x="374" y="438" width="1" height="7" fill="#ff0000"/>
<rect x="371" y="440" width="6" height="1" fill="#ff0000"/>
<rect x="381" y="441" width="1" height="6" fill="#ff0000"/>
<rect x="378" y="438" width="6" height="1" fill="#ff0000"/>
<rect x="378" y="440" width="6" height="1" fill="#ff0000"/>
<rect x="378" y="438" width="1" height="3" fill="#ff0000"/>
<rect x="383" y="438" width="1" height="3" fill="#ff0000"/>
<rect x="388" y="439" width="1" height="14" fill="#008000"/>
<rect x="385" y="439" width="6" height="13" fill="#008000"/>
<rect x="395" y="448" width="1" height="6" fill="#ff0000"/>
<rect x="392" y="452" width="6" height="1" fill="#ff0000"/>
<rect x="402" y="445" width="1" height="3" fill="#ff0000"/>
<rect x="399" y="448" width="6" height="1" fill="#ff0000"/>
<rect x="399" y="454" width="6" height="1" fill="#ff0000"/>
<rect x="399" y="448" width="1" height="7" fill="#ff0000"/>
<rect x="404" y="448" width="1" height="7" fill="#ff0000"/>
<rect x="409" y="448" width="1" height="1" fill="#ff0000"/>
<rect x="406" y="436" width="6" height="1" fill="#ff0000"/>
<rect x="406" y="447" width="6" height="1" fill="#ff0000"/>
<rect x="406" y="436" width="1" height="12" fill="#ff0000"/>
<rect x="411" y="436" width="1" height="12" fill="#ff0000"/>
<rect x="416" y="437" width="1" height="3" fill="#ff0000"/>
<rect x="413" y="434" width="6" height="1" fill="#ff0000"/>
<rect x="413" y="436" width="6" height="1" fill="#ff0000"/>
<rect x="413" y="434" width="1" height="3" fill="#ff0000"/>
<rect x="418" y="434" width="1" height="3" fill="#ff0000"/>
<rect x="423" y="433" width="1" height="6" fill="#008000"/>
<rect x="420" y="436" width="6" height="1" fill="#008000"/>
<rect x="430" y="439" width="1" height="9" fill="#008000"/>
<rect x="427" y="439" width="6" height="5" fill="#008000"/>
<rect x="437" y="436" width="1" height="5" fill="#ff0000"/>
<rect x="437" y="447" width="1" height="2" fill="#ff0000"/>
<rect x="434" y="441" width="6" height="1" fill="#ff0000"/>
<rect x="434" y="446" width="6" height="1" fill="#ff0000"/>
<rect x="434" y="441" width="1" height="6" fill="#ff0000"/>
<rect x="439" y="441" width="1" height="6" fill="#ff0000"/>
<rect x="444" y="440" width="1" height="7" fill="#008000"/>
<rect x="441" y="442" width="6" height="1" fill="#008000"/>
<rect x="451" y="430" width="1" height="2" fill="#ff0000"/>
<rect x="448" y="432" width="6" height="1" fill="#ff0000"/>
<rect x="448" y="445" width="6" height="1" fill="#ff0000"/>
<rect x="448" y="432" width="1" height="14" fill="#ff0000"/>
<rect x="453" y="432" width="1" height="14" fill="#ff0000"/>
<rect x="458" y="424" width="1" height="10" fill="#ff0000"/>
<rect x="455" y="430" width="6" height="2" fill="#ff0000"/>
<rect x="465" y="413" width="1" height="2" fill="#ff0000"/>
<rect x="462" y="415" width="6" height="1" fill="#ff0000"/>
<rect x="462" y="428" width="6" height="1" fill="#ff0000"/>
<rect x="462" y="415" width="1" height="14" fill="#ff0000"/>
<rect x="467" y="415" width="1" height="14" fill="#ff0000"/>
<rect x="472" y="402" width="1" height="1" fill="#ff0000"/>
<rect x="472" y="413" width="1" height="1" fill="#ff0000"/>
<rect x="469" y="403" width="6" height="1" fill="#ff0000"/>
<rect x="469" y="412" width="6" height="1" fill="#ff0000"/>
<rect x="469" y="403" width="1" height="10" fill="#ff0000"/>
<rect x="474" y="403" width="1" height="10" fill="#ff0000"/>
<rect x="479" y="372" width="1" height="2" fill="#ff0000"/>
<rect x="476" y="374" width="6" height="1" fill="#ff0000"/>
<rect x="476" y="397" width="6" height="1" fill="#ff0000"/>
<rect x="476" y="374" width="1" height="24" fill="#ff0000"/>
<rect x="481" y="374" width="1" height="24" fill="#ff0000"/>
<rect x="486" y="365" width="1" height="12" fill="#ff0000"/>
<rect x="483" y="371" width="6" height="2" fill="#ff0000"/>
<rect x="493" y="364" width="1" height="10" fill="#ff0000"/>
<rect x="490" y="372" width="6" height="2" fill="#ff0000"/>
<rect x="500" y="373" width="1" height="3" fill="#ff0000"/>
<rect x="497" y="360" width="6" height="1" fill="#ff0000"/>
<rect x="497" y="372" width="6" height="1" fill="#ff0000"/>
<rect x="497" y="360" width="1" height="13" fill="#ff0000"/>
<rect x="502" y="360" width="1" height="13" fill="#ff0000"/>
<rect x="507" y="352" width="1" height="18" fill="#008000"/>
<rect x="504" y="365" width="6" height="5" fill="#008000"/>
<rect x="514" y="367" width="1" height="2" fill="#ff0000"/>
<rect x="511" y="348" width="6" height="1" fill="#ff0000"/>
<rect x="511" y="366" width="6" height="1" fill="#ff0000"/>
<rect x="511" y="348" width="1" height="19" fill="#ff0000"/>
<rect x="516" y="348" width="1" height="19" fill="#ff0000"/>
<rect x="521" y="347" width="1" height="10" fill="#008000"/>
<rect x="518" y="347" width="6" height="3" fill="#008000"/>
<rect x="528" y="348" width="1" height="3" fill="#ff0000"/>
<rect x="528" y="356" width="1" height="9" fill="#ff0000"/>
<rect x="525" y="351" width="6" height="1" fill="#ff0000"/>
<rect x="525" y="355" width="6" height="1" fill="#ff0000"/>
<rect x="525" y="351" width="1" height="5" fill="#ff0000"/>
<rect x="530" y="351" width="1" height="5" fill="#ff0000"/>
<rect x="535" y="351" width="1" height="18" fill="#008000"/>
<rect x="532" y="352" width="6" height="16" fill="#008000"/>
<rect x="542" y="362" width="1" height="2" fill="#ff0000"/>
<rect x="542" y="369" width="1" height="3" fill="#ff0000"/>
<rect x="539" y="364" width="6" height="1" fill="#ff0000"/>
<rect x="539" y="368" width="6" height="1" fill="#ff0000"/>
<rect x="539" y="364" width="1" height="5" fill="#ff0000"/>
<rect x="544" y="364" width="1" height="5" fill="#ff0000"/>
<rect x="546" y="347" width="6" height="1" fill="#ff0000"/>
<rect x="546" y="361" width="6" height="1" fill="#ff0000"/>
<rect x="546" y="347" width="1" height="15" fill="#ff0000"/>
<rect x="551" y="347" width="1" height="15" fill="#ff0000"/>
<rect x="556" y="349" width="1" height="7" fill="#008000"/>
<rect x="553" y="349" width="6" height="1" fill="#008000"/>
<rect x="563" y="345" width="1" height="15" fill="#008000"/>
<rect x="560" y="348" width="6" height="1" fill="#008000"/>
<rect x="570" y="345" width="1" height="14" fill="#008000"/>
<rect x="567" y="349" width="6" height="9" fill="#008000"/>
<rect x="577" y="344" width="1" height="2" fill="#ff0000"/>
<rect x="577" y="357" width="1" height="3" fill="#ff0000"/>
<rect x="574" y="346" width="6" height="1" fill="#ff0000"/>
<rect x="574" y="356" width="6" height="1" fill="#ff0000"/>
<rect x="574" y="346" width="1" height="11" fill="#ff0000"/>
<rect x="579" y="346" width="1" height="11" fill="#ff0000"/>
<rect x="584" y="338" width="1" height="1" fill="#ff0000"/>
<rect x="581" y="339" width="6" height="1" fill="#ff0000"/>
<rect x="581" y="344" width="6" height="1" fill="#ff0000"/>
<rect x="581" y="339" width="1" height="6" fill="#ff0000"/>
<rect x="586" y="339" width="1" height="6" fill="#ff0000"/>
<rect x="591" y="335" width="1" height="11" fill="#ff0000"/>
<rect x="588" y="336" width="6" height="1" fill="#ff0000"/>
<rect x="598" y="334" width="1" height="8" fill="#008000"/>
<rect x="595" y="338" width="6" height="1" fill="#008000"/>
<rect x="605" y="339" width="1" height="17" fill="#008000"/>
<rect x="602" y="339" width="6" height="5" fill="#008000"/>
<rect x="612" y="337" width="1" height="1" fill="#ff0000"/>
<rect x="612" y="345" width="1" height="3" fill="#ff0000"/>
<rect x="609" y="338" width="6" height="1" fill="#ff0000"/>
<rect x="609" y="344" width="6" height="1" fill="#ff0000"/>
<rect x="609" y="338" width="1" height="7" fill="#ff0000"/>
<rect x="614" y="338" width="1" height="7" fill="#ff0000"/>
<rect x="619" y="338" width="1" height="11" fill="#008000"/>
<rect x="616" y="338" width="6" height="7" fill="#008000"/>
<rect x="626" y="344" width="1" height="17" fill="#008000"/>
<rect x="623" y="347" width="6" height="10" fill="#008000"/>
<rect x="633" y="352" width="1" height="8" fill="#ff0000"/>
<rect x="630" y="356" width="6" height="1" fill="#ff0000"/>
<rect x="640" y="351" width="1" height="13" fill="#008000"/>
<rect x="637" y="355" width="6" height="9" fill="#008000"/>
<rect x="647" y="351" width="1" height="1" fill="#ff0000"/>
<rect x="647" y="362" width="1" height="4" fill="#ff0000"/>
<rect x="644" y="352" width="6" height="1" fill="#ff0000"/>
<rect x="644" y="361" width="6" height="1" fill="#ff0000"/>
<rect x="644" y="352" width="1" height="10" fill="#ff0000"/>
<rect x="649" y="352" width="1" height="10" fill="#ff0000"/>
<rect x="654" y="350" width="1" height="1" fill="#ff0000"/>
<rect x="651" y="341" width="6" height="1" fill="#ff0000"/>
<rect x="651" y="349" width="6" height="1" fill="#ff0000"/>
<rect x="651" y="341" width="1" height="9" fill="#ff0000"/>
<rect x="656" y="341" width="1" height="9" fill="#ff0000"/>
<rect x="661" y="323" width="1" height="1" fill="#ff0000"/>
<rect x="661" y="339" width="1" height="3" fill="#ff0000"/>
<rect x="658" y="324" width="6" height="1" fill="#ff0000"/>
<rect x="658" y="338" width="6" height="1" fill="#ff0000"/>
<rect x="658" y="324" width="1" height="15" fill="#ff0000"/>
<rect x="663" y="324" width="1" height="15" fill="#ff0000"/>
<rect x="668" y="310" width="1" height="1" fill="#ff0000"/>
<rect x="665" y="311" width="6" height="1" fill="#ff0000"/>
<rect x="665" y="322" width="6" height="1" fill="#ff0000"/>
<rect x="665" y="311" width="1" height="12" fill="#ff0000"/>
<rect x="670" y="311" width="1" height="12" fill="#ff0000"/>
<rect x="675" y="311" width="1" height="3" fill="#ff0000"/>
<rect x="672" y="301" width="6" height="1" fill="#ff0000"/>
<rect x="672" y="310" width="6" height="1" fill="#ff0000"/>
<rect x="672" y="301" width="1" height="10" fill="#ff0000"/>
<rect x="677" y="301" width="1" height="10" fill="#ff0000"/>
<rect x="682" y="289" width="1" height="1" fill="#ff0000"/>
<rect x="682" y="299" width="1" height="2" fill="#ff0000"/>
<rect x="679" y="290" width="6" height="1" fill="#ff0000"/>
<rect x="679" y="298" width="6" height="1" fill="#ff0000"/>
<rect x="679" y="290" width="1" height="9" fill="#ff0000"/>
<rect x="684" y="290" width="1" height="9" fill="#ff0000"/>
<rect x="689" y="288" width="1" height="8" fill="#008000"/>
<rect x="686" y="289" width="6" height="1" fill="#008000"/>
<rect x="696" y="294" width="1" height="7" fill="#008000"/>
<rect x="693" y="295" width="6" height="1" fill="#008000"/>
<rect x="703" y="281" width="1" height="21" fill="#008000"/>
<rect x="700" y="296" width="6" height="2" fill="#008000"/>
<rect x="710" y="300" width="1" height="3" fill="#ff0000"/>
<rect x="707" y="287" width="6" height="1" fill="#ff0000"/>
<rect x="707" y="299" width="6" height="1" fill="#ff0000"/>
<rect x="707" y="287" width="1" height="13" fill="#ff0000"/>
<rect x="712" y="287" width="1" height="13" fill="#ff0000"/>
<rect x="717" y="282" width="1" height="1" fill="#ff0000"/>
<rect x="717" y="288" width="1" height="5" fill="#ff0000"/>
<rect x="714" y="283" width="6" height="1" fill="#ff0000"/>
<rect x="714" y="287" width="6" height="1" fill="#ff0000"/>
<rect x="714" y="283" width="1" height="5" fill="#ff0000"/>
<rect x="719" y="283" width="1" height="5" fill="#ff0000"/>
<rect x="724" y="279" width="1" height="29" fill="#008000"/>
<rect x="721" y="282" width="6" height="25" fill="#008000"/>
<rect x="731" y="300" width="1" height="1" fill="#ff0000"/>
<rect x="731" y="306" width="1" height="9" fill="#ff0000"/>
<rect x="728" y="301" width="6" height="1" fill="#ff0000"/>
<rect x="728" y="305" width="6" height="1" fill="#ff0000"/>
<rect x="728" y="301" width="1" height="5" fill="#ff0000"/>
<rect x="733" y="301" width="1" height="5" fill="#ff0000"/>
<rect x="738" y="294" width="1" height="2" fill="#ff0000"/>
<rect x="738" y="303" width="1" height="3" fill="#ff0000"/>
<rect x="735" y="296" width="6" height="1" fill="#ff0000"/>
<rect x="735" y="302" width="6" height="1" fill="#ff0000"/>
<rect x="735" y="296" width="1" height="7" fill="#ff0000"/>
<rect x="740" y="296" width="1" height="7" fill="#ff0000"/>
<rect x="745" y="287" width="1" height="1" fill="#ff0000"/>
<rect x="745" y="298" width="1" height="4" fill="#ff0000"/>
<rect x="742" y="288" width="6" height="1" fill="#ff0000"/>
<rect x="742" y="297" width="6" height="1" fill="#ff0000"/>
<rect x="742" y="288" width="1" height="10" fill="#ff0000"/>
<rect x="747" y="288" width="1" height="10" fill="#ff0000"/>
<rect x="752" y="292" width="1" height="22" fill="#008000"/>
<rect x="749" y="292" width="6" height="19" fill="#008000"/>
<rect x="759" y="298" width="1" height="1" fill="#ff0000"/>
<rect x="756" y="299" width="6" height="1" fill="#ff0000"/>
<rect x="756" y="310" width="6" height="1" fill="#ff0000"/>
<rect x="756" y="299" width="1" height="12" fill="#ff0000"/>
<rect x="761" y="299" width="1" height="12" fill="#ff0000"/>
<rect x="766" y="279" width="1" height="1" fill="#ff0000"/>
<rect x="766" y="304" width="1" height="2" fill="#ff0000"/>
<rect x="763" y="280" width="6" height="1" fill="#ff0000"/>
<rect x="763" y="303" width="6" height="1" fill="#ff0000"/>
<rect x="763" y="280" width="1" height="24" fill="#ff0000"/>
<rect x="768" y="280" width="1" height="24" fill="#ff0000"/>
<rect x="773" y="269" width="1" height="16" fill="#008000"/>
<rect x="770" y="275" width="6" height="5" fill="#008000"/>
<rect x="780" y="277" width="1" height="1" fill="#ff0000"/>
<rect x="780" y="283" width="1" height="5" fill="#ff0000"/>
<rect x="777" y="278" width="6" height="1" fill="#ff0000"/>
<rect x="777" y="282" width="6" height="1" fill="#ff0000"/>
<rect x="777" y="278" width="1" height="5" fill="#ff0000"/>
<rect x="782" y="278" width="1" height="5" fill="#ff0000"/>
<rect x="787" y="269" width="1" height="3" fill="#ff0000"/>
<rect x="787" y="275" width="1" height="4" fill="#ff0000"/>
<rect x="784" y="272" width="6" height="1" fill="#ff0000"/>
<rect x="784" y="274" width="6" height="1" fill="#ff0000"/>
<rect x="784" y="272" width="1" height="3" fill="#ff0000"/>
<rect x="789" y="272" width="1" height="3" fill="#ff0000"/>
<rect x="794" y="268" width="1" height="6" fill="#ff0000"/>
<rect x="791" y="270" width="6" height="1" fill="#ff0000"/>
<rect x="801" y="266" width="1" height="8" fill="#ff0000"/>
<rect x="798" y="258" width="6" height="1" fill="#ff0000"/>
<rect x="798" y="265" width="6" height="1" fill="#ff0000"/>
<rect x="798" y="258" width="1" height="8" fill="#ff0000"/>
<rect x="803" y="258" width="1" height="8" fill="#ff0000"/>
<rect x="808" y="253" width="1" height="2" fill="#ff0000"/>
<rect x="808" y="258" width="1" height="9" fill="#ff0000"/>
<rect x="805" y="255" width="6" height="1" fill="#ff0000"/>
<rect x="805" y="257" width="6" height="1" fill="#ff0000"/>
<rect x="805" y="255" width="1" height="3" fill="#ff0000"/>
<rect x="810" y="255" width="1" height="3" fill="#ff0000"/>
<rect x="815" y="257" width="1" height="11" fill="#008000"/>
<rect x="812" y="259" width="6" height="4" fill="#008000"/>
<rect x="822" y="268" width="1" height="14" fill="#008000"/>
<rect x="819" y="268" width="6" height="1" fill="#008000"/>
<rect x="829" y="261" width="1" height="16" fill="#008000"/>
<rect x="826" y="270" width="6" height="1" fill="#008000"/>
<rect x="836" y="272" width="1" height="8" fill="#ff0000"/>
<rect x="833" y="263" width="6" height="1" fill="#ff0000"/>
<rect x="833" y="271" width="6" height="1" fill="#ff0000"/>
<rect x="833" y="263" width="1" height="9" fill="#ff0000"/>
<rect x="838" y="263" width="1" height="9" fill="#ff0000"/>
<rect x="843" y="255" width="1" height="20" fill="#008000"/>
<rect x="840" y="271" width="6" height="2" fill="#008000"/>
<rect x="850" y="272" width="1" height="26" fill="#008000"/>
<rect x="847" y="275" width="6" height="7" fill="#008000"/>
<rect x="857" y="279" width="1" height="3" fill="#ff0000"/>
<rect x="854" y="273" width="6" height="1" fill="#ff0000"/>
<rect x="854" y="278" width="6" height="1" fill="#ff0000"/>
<rect x="854" y="273" width="1" height="6" fill="#ff0000"/>
<rect x="859" y="273" width="1" height="6" fill="#ff0000"/>
<rect x="864" y="271" width="1" height="13" fill="#008000"/>
<rect x="861" y="274" width="6" height="9" fill="#008000"/>
<rect x="871" y="277" width="1" height="14" fill="#008000"/>
<rect x="868" y="283" width="6" height="7" fill="#008000"/>
<rect x="878" y="289" width="1" height="17" fill="#008000"/>
<rect x="875" y="292" width="6" height="12" fill="#008000"/>
<rect x="885" y="298" width="1" height="9" fill="#008000"/>
<rect x="882" y="303" width="6" height="1" fill="#008000"/>
<rect x="892" y="309" width="1" height="7" fill="#008000"/>
<rect x="889" y="309" width="6" height="1" fill="#008000"/>
<rect x="899" y="283" width="1" height="1" fill="#ff0000"/>
<rect x="896" y="284" width="6" height="1" fill="#ff0000"/>
<rect x="896" y="307" width="6" height="1" fill="#ff0000"/>
<rect x="896" y="284" width="1" height="24" fill="#ff0000"/>
<rect x="901" y="284" width="1" height="24" fill="#ff0000"/>
<rect x="906" y="259" width="1" height="5" fill="#ff0000"/>
<rect x="906" y="280" width="1" height="3" fill="#ff0000"/>
<rect x="903" y="264" width="6" height="1" fill="#ff0000"/>
<rect x="903" y="279" width="6" height="1" fill="#ff0000"/>
<rect x="903" y="264" width="1" height="16" fill="#ff0000"/>
<rect x="908" y="264" width="1" height="16" fill="#ff0000"/>
<rect x="913" y="250" width="1" height="4" fill="#ff0000"/>
<rect x="913" y="264" width="1" height="4" fill="#ff0000"/>
<rect x="910" y="254" width="6" height="1" fill="#ff0000"/>
<rect x="910" y="263" width="6" height="1" fill="#ff0000"/>
<rect x="910" y="254" width="1" height="10" fill="#ff0000"/>
<rect x="915" y="254" width="1" height="10" fill="#ff0000"/>
<rect x="920" y="235" width="1" height="2" fill="#ff0000"/>
<rect x="920" y="252" width="1" height="5" fill="#ff0000"/>
<rect x="917" y="237" width="6" height="1" fill="#ff0000"/>
<rect x="917" y="251" width="6" height="1" fill="#ff0000"/>
<rect x="917" y="237" width="1" height="15" fill="#ff0000"/>
<rect x="922" y="237" width="1" height="15" fill="#ff0000"/>
<rect x="927" y="228" width="1" height="10" fill="#ff0000"/>
<rect x="924" y="232" width="6" height="2" fill="#ff0000"/>
<rect x="934" y="229" width="1" height="10" fill="#ff0000"/>
<rect x="931" y="231" width="6" height="2" fill="#ff0000"/>
<rect x="941" y="230" width="1" height="10" fill="#008000"/>
<rect x="938" y="230" width="6" height="8" fill="#008000"/>
<rect x="948" y="233" width="1" height="1" fill="#ff0000"/>
<rect x="948" y="238" width="1" height="10" fill="#ff0000"/>
<rect x="945" y="234" width="6" height="1" fill="#ff0000"/>
<rect x="945" y="237" width="6" height="1" fill="#ff0000"/>
<rect x="945" y="234" width="1" height="4" fill="#ff0000"/>
<rect x="950" y="234" width="1" height="4" fill="#ff0000"/>
<rect x="955" y="219" width="1" height="25" fill="#008000"/>
<rect x="952" y="233" width="6" height="5" fill="#008000"/>
<rect x="962" y="228" width="1" height="5" fill="#ff0000"/>
<rect x="959" y="207" width="6" height="1" fill="#ff0000"/>
<rect x="959" y="227" width="6" height="1" fill="#ff0000"/>
<rect x="959" y="207" width="1" height="21" fill="#ff0000"/>
<rect x="964" y="207" width="1" height="21" fill="#ff0000"/>
<rect x="969" y="188" width="1" height="35" fill="#008000"/>
<rect x="966" y="201" width="6" height="8" fill="#008000"/>
<rect x="976" y="218" width="1" height="5" fill="#ff0000"/>
<rect x="973" y="195" width="6" height="1" fill="#ff0000"/>
<rect x="973" y="217" width="6" height="1" fill="#ff0000"/>
<rect x="973" y="195" width="1" height="23" fill="#ff0000"/>
<rect x="978" y="195" width="1" height="23" fill="#ff0000"/>
<rect x="983" y="189" width="1" height="19" fill="#008000"/>
<rect x="980" y="195" width="6" height="5" fill="#008000"/>
<rect x="990" y="204" width="1" height="12" fill="#ff0000"/>
<rect x="987" y="204" width="6" height="1" fill="#ff0000"/>
<rect x="997" y="187" width="1" height="21" fill="#008000"/>
<rect x="994" y="188" width="6" height="19" fill="#008000"/>
<rect x="1004" y="206" width="1" height="15" fill="#008000"/>
<rect x="1001" y="207" width="6" height="10" fill="#008000"/>
<rect x="1011" y="215" width="1" height="10" fill="#008000"/>
<rect x="1008" y="219" width="6" height="1" fill="#008000"/>
<rect x="1018" y="216" width="1" height="3" fill="#ff0000"/>
<rect x="1018" y="224" width="1" height="3" fill="#ff0000"/>
<rect x="1015" y="219" width="6" height="1" fill="#ff0000"/>
<rect x="1015" y="223" width="6" height="1" fill="#ff0000"/>
<rect x="1015" y="219" width="1" height="5" fill="#ff0000"/>
<rect x="1020" y="219" width="1" height="5" fill="#ff0000"/>
<rect x="1025" y="219" width="1" height="3" fill="#ff0000"/>
<rect x="1022" y="200" width="6" height="1" fill="#ff0000"/>
<rect x="1022" y="218" width="6" height="1" fill="#ff0000"/>
<rect x="1022" y="200" width="1" height="19" fill="#ff0000"/>
<rect x="1027" y="200" width="1" height="19" fill="#ff0000"/>
<rect x="70" y="578" width="6" height="1" fill="#ff0000"/>
<rect x="70" y="578" width="1" height="12" fill="#ff0000"/>
<rect x="75" y="578" width="1" height="12" fill="#ff0000"/>
<rect x="70" y="589" width="6" height="1" fill="#ff0000"/>
<rect x="77" y="578" width="6" height="12" fill="#008000"/>
<rect x="84" y="578" width="6" height="1" fill="#ff0000"/>
<rect x="84" y="578" width="1" height="12" fill="#ff0000"/>
<rect x="89" y="578" width="1" height="12" fill="#ff0000"/>
<rect x="84" y="589" width="6" height="1" fill="#ff0000"/>
<rect x="91" y="578" width="6" height="12" fill="#008000"/>
<rect x="98" y="571" width="6" height="1" fill="#ff0000"/>
<rect x="98" y="571" width="1" height="19" fill="#ff0000"/>
<rect x="103" y="571" width="1" height="19" fill="#ff0000"/>
<rect x="98" y="589" width="6" height="1" fill="#ff0000"/>
<rect x="105" y="574" width="6" height="16" fill="#008000"/>
<rect x="112" y="578" width="6" height="12" fill="#008000"/>
<rect x="119" y="578" width="6" height="12" fill="#008000"/>
<rect x="126" y="579" width="6" height="1" fill="#ff0000"/>
<rect x="126" y="579" width="1" height="11" fill="#ff0000"/>
<rect x="131" y="579" width="1" height="11" fill="#ff0000"/>
<rect x="126" y="589" width="6" height="1" fill="#ff0000"/>
<rect x="133" y="580" width="6" height="10" fill="#008000"/>
<rect x="140" y="580" width="6" height="10" fill="#008000"/>
<rect x="147" y="580" width="6" height="1" fill="#ff0000"/>
<rect x="147" y="580" width="1" height="10" fill="#ff0000"/>
<rect x="152" y="580" width="1" height="10" fill="#ff0000"/>
<rect x="147" y="589" width="6" height="1" fill="#ff0000"/>
<rect x="154" y="578" width="6" height="12" fill="#008000"/>
<rect x="161" y="580" width="6" height="1" fill="#ff0000"/>
<rect x="161" y="580" width="1" height="10" fill="#ff0000"/>
<rect x="166" y="580" width="1" height="10" fill="#ff0000"/>
<rect x="161" y="589" width="6" height="1" fill="#ff0000"/>
<rect x="168" y="579" width="6" height="11" fill="#008000"/>
<rect x="175" y="579" width="6" height="11" fill="#008000"/>
<rect x="182" y="577" width="6" height="1" fill="#ff0000"/>
<rect x="182" y="577" width="1" height="13" fill="#ff0000"/>
<rect x="187" y="577" width="1" height="13" fill="#ff0000"/>
<rect x="182" y="589" width="6" height="1" fill="#ff0000"/>
<rect x="189" y="577" width="6" height="13" fill="#008000"/>
<rect x="196" y="578" width="6" height="12" fill="#008000"/>
<rect x="203" y="579" width="6" height="11" fill="#008000"/>
<rect x="210" y="578" width="6" height="12" fill="#008000"/>
<rect x="217" y="579" width="6" height="1" fill="#ff0000"/>
<rect x="217" y="579" width="1" height="11" fill="#ff0000"/>
<rect x="222" y="579" width="1" height="11" fill="#ff0000"/>
<rect x="217" y="589" width="6" height="1" fill="#ff0000"/>
<rect x="224" y="579" width="6" height="11" fill="#008000"/>
<rect x="231" y="580" width="6" height="1" fill="#ff0000"/>
<rect x="231" y="580" width="1" height="10" fill="#ff0000"/>
<rect x="236" y="580" width="1" height="10" fill="#ff0000"/>
<rect x="231" y="589" width="6" height="1" fill="#ff0000"/>
<rect x="238" y="577" width="6" height="1" fill="#ff0000"/>
<rect x="238" y="577" width="1" height="13" fill="#ff0000"/>
<rect x="243" y="577" width="1" height="13" fill="#ff0000"/>
<rect x="238" y="589" width="6" height="1" fill="#ff0000"/>
<rect x="245" y="578" width="6" height="1" fill="#ff0000"/>
<rect x="245" y="578" width="1" height="12" fill="#ff0000"/>
<rect x="250" y="578" width="1" height="12" fill="#ff0000"/>
<rect x="245" y="589" width="6" height="1" fill="#ff0000"/>
<rect x="252" y="577" width="6" height="1" fill="#ff0000"/>
<rect x="252" y="577" width="1" height="13" fill="#ff0000"/>
<rect x="257" y="577" width="1" height="13" fill="#ff0000"/>
<rect x="252" y="589" width="6" height="1" fill="#ff0000"/>
<rect x="259" y="574" width="6" height="1" fill="#ff0000"/>
<rect x="259" y="574" width="1" height="16" fill="#ff0000"/>
<rect x="264" y="574" width="1" height="16" fill="#ff0000"/>
<rect x="259" y="589" width="6" height="1" fill="#ff0000"/>
<rect x="266" y="575" width="6" height="1" fill="#ff0000"/>
<rect x="266" y="575" width="1" height="15" fill="#ff0000"/>
<rect x="271" y="575" width="1" height="15" fill="#ff0000"/>
<rect x="266" y="589" width="6" height="1" fill="#ff0000"/>
<rect x="273" y="576" width="6" height="14" fill="#008000"/>
<rect x="280" y="576" width="6" height="14" fill="#008000"/>
<rect x="287" y="575" width="6" height="15" fill="#008000"/>
<rect x="294" y="579" width="6" height="1" fill="#ff0000"/>
<rect x="294" y="579" width="1" height="11" fill="#ff0000"/>
<rect x="299" y="579" width="1" height="11" fill="#ff0000"/>
<rect x="294" y="589" width="6" height="1" fill="#ff0000"/>
<rect x="301" y="579" width="6" height="11" fill="#008000"/>
<rect x="308" y="579" width="6" height="1" fill="#ff0000"/>
<rect x="308" y="579" width="1" height="11" fill="#ff0000"/>
<rect x="313" y="579" width="1" height="11" fill="#ff0000"/>
<rect x="308" y="589" width="6" height="1" fill="#ff0000"/>
<rect x="315" y="579" width="6" height="11" fill="#008000"/>
<rect x="322" y="577" width="6" height="1" fill="#ff0000"/>
<rect x="322" y="577" width="1" height="13" fill="#ff0000"/>
<rect x="327" y="577" width="1" height="13" fill="#ff0000"/>
<rect x="322" y="589" width="6" height="1" fill="#ff0000"/>
<rect x="329" y="574" width="6" height="1" fill="#ff0000"/>
<rect x="329" y="574" width="1" height="16" fill="#ff0000"/>
<rect x="334" y="574" width="1" height="16" fill="#ff0000"/>
<rect x="329" y="589" width="6" height="1" fill="#ff0000"/>
<rect x="336" y="575" width="6" height="1" fill="#ff0000"/>
<rect x="336" y="575" width="1" height="15" fill="#ff0000"/>
<rect x="341" y="575" width="1" height="15" fill="#ff0000"/>
<rect x="336" y="589" width="6" height="1" fill="#ff0000"/>
<rect x="343" y="574" width="6" height="16" fill="#008000"/>
<rect x="350" y="572" width="6" height="1" fill="#ff0000"/>
<rect x="350" y="572" width="1" height="18" fill="#ff0000"/>
<rect x="355" y="572" width="1" height="18" fill="#ff0000"/>
<rect x="350" y="589" width="6" height="1" fill="#ff0000"/>
<rect x="357" y="570" width="6" height="1" fill="#ff0000"/>
<rect x="357" y="570" width="1" height="20" fill="#ff0000"/>
<rect x="362" y="570" width="1" height="20" fill="#ff0000"/>
<rect x="357" y="589" width="6" height="1" fill="#ff0000"/>
<rect x="364" y="573" width="6" height="17" fill="#008000"/>
<rect x="371" y="574" width="6" height="1" fill="#ff0000"/>
<rect x="371" y="574" width="1" height="16" fill="#ff0000"/>
<rect x="376" y="574" width="1" height="16" fill="#ff0000"/>
<rect x="371" y="589" width="6" height="1" fill="#ff0000"/>
<rect x="378" y="575" width="6" height="1" fill="#ff0000"/>
<rect x="378" y="575" width="1" height="15" fill="#ff0000"/>
<rect x="383" y="575" width="1" height="15" fill="#ff0000"/>
<rect x="378" y="589" width="6" height="1" fill="#ff0000"/>
<rect x="385" y="572" width="6" height="18" fill="#008000"/>
<rect x="392" y="574" width="6" height="1" fill="#ff0000"/>
<rect x="392" y="574" width="1" height="16" fill="#ff0000"/>
<rect x="397" y="574" width="1" height="16" fill="#ff0000"/>
<rect x="392" y="589" width="6" height="1" fill="#ff0000"/>
<rect x="399" y="573" width="6" height="1" fill="#ff0000"/>
<rect x="399" y="573" width="1" height="17" fill="#ff0000"/>
<rect x="404" y="573" width="1" height="17" fill="#ff0000"/>
<rect x="399" y="589" width="6" height="1" fill="#ff0000"/>
<rect x="406" y="572" width="6" height="1" fill="#ff0000"/>
<rect x="406" y="572" width="1" height="18" fill="#ff0000"/>
<rect x="411" y="572" width="1" height="18" fill="#ff0000"/>
<rect x="406" y="589" width="6" height="1" fill="#ff0000"/>
<rect x="413" y="570" width="6" height="1" fill="#ff0000"/>
<rect x="413" y="570" width="1" height="20" fill="#ff0000"/>
<rect x="418" y="570" width="1" height="20" fill="#ff0000"/>
<rect x="413" y="589" width="6" height="1" fill="#ff0000"/>
<rect x="420" y="568" width="6" height="22" fill="#008000"/>
<rect x="427" y="573" width="6" height="17" fill="#008000"/>
<rect x="434" y="573" width="6" height="1" fill="#ff0000"/>
<rect x="434" y="573" width="1" height="17" fill="#ff0000"/>
<rect x="439" y="573" width="1" height="17" fill="#ff0000"/>
<rect x="434" y="589" width="6" height="1" fill="#ff0000"/>
<rect x="441" y="575" width="6" height="15" fill="#008000"/>
<rect x="448" y="570" width="6" height="1" fill="#ff0000"/>
<rect x="448" y="570" width="1" height="20" fill="#ff0000"/>
<rect x="453" y="570" width="1" height="20" fill="#ff0000"/>
<rect x="448" y="589" width="6" height="1" fill="#ff0000"/>
<rect x="455" y="568" width="6" height="1" fill="#ff0000"/>
<rect x="455" y="568" width="1" height="22" fill="#ff0000"/>
<rect x="460" y="568" width="1" height="22" fill="#ff0000"/>
<rect x="455" y="589" width="6" height="1" fill="#ff0000"/>
<rect x="462" y="563" width="6" height="1" fill="#ff0000"/>
<rect x="462" y="563" width="1" height="27" fill="#ff0000"/>
<rect x="467" y="563" width="1" height="27" fill="#ff0000"/>
<rect x="462" y="589" width="6" height="1" fill="#ff0000"/>
<rect x="469" y="567" width="6" height="1" fill="#ff0000"/>
<rect x="469" y="567" width="1" height="23" fill="#ff0000"/>
<rect x="474" y="567" width="1" height="23" fill="#ff0000"/>
<rect x="469" y="589" width="6" height="1" fill="#ff0000"/>
<rect x="476" y="552" width="6" height="1" fill="#ff0000"/>
<rect x="476" y="552" width="1" height="38" fill="#ff0000"/>
<rect x="481" y="552" width="1" height="38" fill="#ff0000"/>
<rect x="476" y="589" width="6" height="1" fill="#ff0000"/>
<rect x="483" y="558" width="6" height="1" fill="#ff0000"/>
<rect x="483" y="558" width="1" height="32" fill="#ff0000"/>
<rect x="488" y="558" width="1" height="32" fill="#ff0000"/>
<rect x="483" y="589" width="6" height="1" fill="#ff0000"/>
<rect x="490" y="559" width="6" height="1" fill="#ff0000"/>
<rect x="490" y="559" width="1" height="31" fill="#ff0000"/>
<rect x="495" y="559" width="1" height="31" fill="#ff0000"/>
<rect x="490" y="589" width="6" height="1" fill="#ff0000"/>
<rect x="497" y="564" width="6" height="1" fill="#ff0000"/>
<rect x="497" y="564" width="1" height="26" fill="#ff0000"/>
<rect x="502" y="564" width="1" height="26" fill="#ff0000"/>
<rect x="497" y="589" width="6" height="1" fill="#ff0000"/>
<rect x="504" y="559" width="6" height="31" fill="#008000"/>
<rect x="511" y="562" width="6" height="1" fill="#ff0000"/>
<rect x="511" y="562" width="1" height="28" fill="#ff0000"/>
<rect x="516" y="562" width="1" height="28" fill="#ff0000"/>
<rect x="511" y="589" width="6" height="1" fill="#ff0000"/>
<rect x="518" y="562" width="6" height="28" fill="#008000"/>
<rect x="525" y="562" width="6" height="1" fill="#ff0000"/>
<rect x="525" y="562" width="1" height="28" fill="#ff0000"/>
<rect x="530" y="562" width="1" height="28" fill="#ff0000"/>
<rect x="525" y="589" width="6" height="1" fill="#ff0000"/>
<rect x="532" y="562" width="6" height="28" fill="#008000"/>
<rect x="539" y="568" width="6" height="1" fill="#ff0000"/>
<rect x="539" y="568" width="1" height="22" fill="#ff0000"/>
<rect x="544" y="568" width="1" height="22" fill="#ff0000"/>
<rect x="539" y="589" width="6" height="1" fill="#ff0000"/>
<rect x="546" y="566" width="6" height="1" fill="#ff0000"/>
<rect x="546" y="566" width="1" height="24" fill="#ff0000"/>
<rect x="551" y="566" width="1" height="24" fill="#ff0000"/>
<rect x="546" y="589" width="6" height="1" fill="#ff0000"/>
<rect x="553" y="565" width="6" height="25" fill="#008000"/>
<rect x="560" y="561" width="6" height="29" fill="#008000"/>
<rect x="567" y="563" width="6" height="27" fill="#008000"/>
<rect x="574" y="566" width="6" height="1" fill="#ff0000"/>
<rect x="574" y="566" width="1" height="24" fill="#ff0000"/>
<rect x="579" y="566" width="1" height="24" fill="#ff0000"/>
<rect x="574" y="589" width="6" height="1" fill="#ff0000"/>
<rect x="581" y="564" width="6" height="1" fill="#ff0000"/>
<rect x="581" y="564" width="1" height="26" fill="#ff0000"/>
<rect x="586" y="564" width="1" height="26" fill="#ff0000"/>
<rect x="581" y="589" width="6" height="1" fill="#ff0000"/>
<rect x="588" y="562" width="6" height="1" fill="#ff0000"/>
<rect x="588" y="562" width="1" height="28" fill="#ff0000"/>
<rect x="593" y="562" width="1" height="28" fill="#ff0000"/>
<rect x="588" y="589" width="6" height="1" fill="#ff0000"/>
<rect x="595" y="563" width="6" height="27" fill="#008000"/>
<rect x="602" y="563" width="6" height="27" fill="#008000"/>
<rect x="609" y="564" width="6" height="1" fill="#ff0000"/>
<rect x="609" y="564" width="1" height="26" fill="#ff0000"/>
<rect x="614" y="564" width="1" height="26" fill="#ff0000"/>
<rect x="609" y="589" width="6" height="1" fill="#ff0000"/>
<rect x="616" y="564" width="6" height="26" fill="#008000"/>
<rect x="623" y="564" width="6" height="26" fill="#008000"/>
<rect x="630" y="571" width="6" height="1" fill="#ff0000"/>
<rect x="630" y="571" width="1" height="19" fill="#ff0000"/>
<rect x="635" y="571" width="1" height="19" fill="#ff0000"/>
<rect x="630" y="589" width="6" height="1" fill="#ff0000"/>
<rect x="637" y="570" width="6" height="20" fill="#008000"/>
<rect x="644" y="573" width="6" height="1" fill="#ff0000"/>
<rect x="644" y="573" width="1" height="17" fill="#ff0000"/>
<rect x="649" y="573" width="1" height="17" fill="#ff0000"/>
<rect x="644" y="589" width="6" height="1" fill="#ff0000"/>
<rect x="651" y="569" width="6" height="1" fill="#ff0000"/>
<rect x="651" y="569" width="1" height="21" fill="#ff0000"/>
<rect x="656" y="569" width="1" height="21" fill="#ff0000"/>
<rect x="651" y="589" width="6" height="1" fill="#ff0000"/>
<rect x="658" y="559" width="6" height="1" fill="#ff0000"/>
<rect x="658" y="559" width="1" height="31" fill="#ff0000"/>
<rect x="663" y="559" width="1" height="31" fill="#ff0000"/>
<rect x="658" y="589" width="6" height="1" fill="#ff0000"/>
<rect x="665" y="556" width="6" height="1" fill="#ff0000"/>
<rect x="665" y="556" width="1" height="34" fill="#ff0000"/>
<rect x="670" y="556" width="1" height="34" fill="#ff0000"/>
<rect x="665" y="589" width="6" height="1" fill="#ff0000"/>
<rect x="672" y="558" width="6" height="1" fill="#ff0000"/>
<rect x="672" y="558" width="1" height="32" fill="#ff0000"/>
<rect x="677" y="558" width="1" height="32" fill="#ff0000"/>
<rect x="672" y="589" width="6" height="1" fill="#ff0000"/>
<rect x="679" y="556" width="6" height="1" fill="#ff0000"/>
<rect x="679" y="556" width="1" height="34" fill="#ff0000"/>
<rect x="684" y="556" width="1" height="34" fill="#ff0000"/>
<rect x="679" y="589" width="6" height="1" fill="#ff0000"/>
<rect x="686" y="558" width="6" height="32" fill="#008000"/>
<rect x="693" y="560" width="6" height="30" fill="#008000"/>
<rect x="700" y="554" width="6" height="36" fill="#008000"/>
<rect x="707" y="559" width="6" height="1" fill="#ff0000"/>
<rect x="707" y="559" width="1" height="31" fill="#ff0000"/>
<rect x="712" y="559" width="1" height="31" fill="#ff0000"/>
<rect x="707" y="589" width="6" height="1" fill="#ff0000"/>
<rect x="714" y="556" width="6" height="1" fill="#ff0000"/>
<rect x="714" y="556" width="1" height="34" fill="#ff0000"/>
<rect x="719" y="556" width="1" height="34" fill="#ff0000"/>
<rect x="714" y="589" width="6" height="1" fill="#ff0000"/>
<rect x="721" y="541" width="6" height="49" fill="#008000"/>
<rect x="728" y="556" width="6" height="1" fill="#ff0000"/>
<rect x="728" y="556" width="1" height="34" fill="#ff0000"/>
<rect x="733" y="556" width="1" height="34" fill="#ff0000"/>
<rect x="728" y="589" width="6" height="1" fill="#ff0000"/>
<rect x="735" y="560" width="6" height="1" fill="#ff0000"/>
<rect x="735" y="560" width="1" height="30" fill="#ff0000"/>
<rect x="740" y="560" width="1" height="30" fill="#ff0000"/>
<rect x="735" y="589" width="6" height="1" fill="#ff0000"/>
<rect x="742" y="562" width="6" height="1" fill="#ff0000"/>
<rect x="742" y="562" width="1" height="28" fill="#ff0000"/>
<rect x="747" y="562" width="1" height="28" fill="#ff0000"/>
<rect x="742" y="589" width="6" height="1" fill="#ff0000"/>
<rect x="749" y="562" width="6" height="28" fill="#008000"/>
<rect x="756" y="565" width="6" height="1" fill="#ff0000"/>
<rect x="756" y="565" width="1" height="25" fill="#ff0000"/>
<rect x="761" y="565" width="1" height="25" fill="#ff0000"/>
<rect x="756" y="589" width="6" height="1" fill="#ff0000"/>
<rect x="763" y="554" width="6" height="1" fill="#ff0000"/>
<rect x="763" y="554" width="1" height="36" fill="#ff0000"/>
<rect x="768" y="554" width="1" height="36" fill="#ff0000"/>
<rect x="763" y="589" width="6" height="1" fill="#ff0000"/>
<rect x="770" y="554" width="6" height="36" fill="#008000"/>
<rect x="777" y="562" width="6" height="1" fill="#ff0000"/>
<rect x="777" y="562" width="1" height="28" fill="#ff0000"/>
<rect x="782" y="562" width="1" height="28" fill="#ff0000"/>
<rect x="777" y="589" width="6" height="1" fill="#ff0000"/>
<rect x="784" y="558" width="6" height="1" fill="#ff0000"/>
<rect x="784" y="558" width="1" height="32" fill="#ff0000"/>
<rect x="789" y="558" width="1" height="32" fill="#ff0000"/>
<rect x="784" y="589" width="6" height="1" fill="#ff0000"/>
<rect x="791" y="559" width="6" height="1" fill="#ff0000"/>
<rect x="791" y="559" width="1" height="31" fill="#ff0000"/>
<rect x="796" y="559" width="1" height="31" fill="#ff0000"/>
<rect x="791" y="589" width="6" height="1" fill="#ff0000"/>
<rect x="798" y="557" width="6" height="1" fill="#ff0000"/>
<rect x="798" y="557" width="1" height="33" fill="#ff0000"/>
<rect x="803" y="557" width="1" height="33" fill="#ff0000"/>
<rect x="798" y="589" width="6" height="1" fill="#ff0000"/>
<rect x="805" y="552" width="6" height="1" fill="#ff0000"/>
<rect x="805" y="552" width="1" height="38" fill="#ff0000"/>
<rect x="810" y="552" width="1" height="38" fill="#ff0000"/>
<rect x="805" y="589" width="6" height="1" fill="#ff0000"/>
<rect x="812" y="554" width="6" height="36" fill="#008000"/>
<rect x="819" y="558" width="6" height="32" fill="#008000"/>
<rect x="826" y="558" width="6" height="32" fill="#008000"/>
<rect x="833" y="558" width="6" height="1" fill="#ff0000"/>
<rect x="833" y="558" width="1" height="32" fill="#ff0000"/>
<rect x="838" y="558" width="1" height="32" fill="#ff0000"/>
<rect x="833" y="589" width="6" height="1" fill="#ff0000"/>
<rect x="840" y="550" width="6" height="40" fill="#008000"/>
<rect x="847" y="556" width="6" height="34" fill="#008000"/>
<rect x="854" y="564" width="6" height="1" fill="#ff0000"/>
<rect x="854" y="564" width="1" height="26" fill="#ff0000"/>
<rect x="859" y="564" width="1" height="26" fill="#ff0000"/>
<rect x="854" y="589" width="6" height="1" fill="#ff0000"/>
<rect x="861" y="563" width="6" height="27" fill="#008000"/>
<rect x="868" y="566" width="6" height="24" fill="#008000"/>
<rect x="875" y="564" width="6" height="26" fill="#008000"/>
<rect x="882" y="569" width="6" height="21" fill="#008000"/>
<rect x="889" y="569" width="6" height="21" fill="#008000"/>
<rect x="896" y="561" width="6" height="1" fill="#ff0000"/>
<rect x="896" y="561" width="1" height="29" fill="#ff0000"/>
<rect x="901" y="561" width="1" height="29" fill="#ff0000"/>
<rect x="896" y="589" width="6" height="1" fill="#ff0000"/>
<rect x="903" y="547" width="6" height="1" fill="#ff0000"/>
<rect x="903" y="547" width="1" height="43" fill="#ff0000"/>
<rect x="908" y="547" width="1" height="43" fill="#ff0000"/>
<rect x="903" y="589" width="6" height="1" fill="#ff0000"/>
<rect x="910" y="543" width="6" height="1" fill="#ff0000"/>
<rect x="910" y="543" width="1" height="47" fill="#ff0000"/>
<rect x="915" y="543" width="1" height="47" fill="#ff0000"/>
<rect x="910" y="589" width="6" height="1" fill="#ff0000"/>
<rect x="917" y="538" width="6" height="1" fill="#ff0000"/>
<rect x="917" y="538" width="1" height="52" fill="#ff0000"/>
<rect x="922" y="538" width="1" height="52" fill="#ff0000"/>
<rect x="917" y="589" width="6" height="1" fill="#ff0000"/>
<rect x="924" y="542" width="6" height="1" fill="#ff0000"/>
<rect x="924" y="542" width="1" height="48" fill="#ff0000"/>
<rect x="929" y="542" width="1" height="48" fill="#ff0000"/>
<rect x="924" y="589" width="6" height="1" fill="#ff0000"/>
<rect x="931" y="540" width="6" height="1" fill="#ff0000"/>
<rect x="931" y="540" width="1" height="50" fill="#ff0000"/>
<rect x="936" y="540" width="1" height="50" fill="#ff0000"/>
<rect x="931" y="589" width="6" height="1" fill="#ff0000"/>
<rect x="938" y="548" width="6" height="42" fill="#008000"/>
<rect x="945" y="554" width="6" height="1" fill="#ff0000"/>
<rect x="945" y="554" width="1" height="36" fill="#ff0000"/>
<rect x="950" y="554" width="1" height="36" fill="#ff0000"/>
<rect x="945" y="589" width="6" height="1" fill="#ff0000"/>
<rect x="952" y="543" width="6" height="47" fill="#008000"/>
<rect x="959" y="542" width="6" height="1" fill="#ff0000"/>
<rect x="959" y="542" width="1" height="48" fill="#ff0000"/>
<rect x="964" y="542" width="1" height="48" fill="#ff0000"/>
<rect x="959" y="589" width="6" height="1" fill="#ff0000"/>
<rect x="966" y="524" width="6" height="66" fill="#008000"/>
<rect x="973" y="549" width="6" height="1" fill="#ff0000"/>
<rect x="973" y="549" width="1" height="41" fill="#ff0000"/>
<rect x="978" y="549" width="1" height="41" fill="#ff0000"/>
<rect x="973" y="589" width="6" height="1" fill="#ff0000"/>
<rect x="980" y="543" width="6" height="47" fill="#008000"/>
<rect x="987" y="555" width="6" height="1" fill="#ff0000"/>
<rect x="987" y="555" width="1" height="35" fill="#ff0000"/>
<rect x="992" y="555" width="1" height="35" fill="#ff0000"/>
<rect x="987" y="589" width="6" height="1" fill="#ff0000"/>
<rect x="994" y="555" width="6" height="35" fill="#008000"/>
<rect x="1001" y="558" width="6" height="32" fill="#008000"/>
<rect x="1008" y="560" width="6" height="30" fill="#008000"/>
<rect x="1015" y="563" width="6" height="1" fill="#ff0000"/>
<rect x="1015" y="563" width="1" height="27" fill="#ff0000"/>
<rect x="1020" y="563" width="1" height="27" fill="#ff0000"/>
<rect x="1015" y="589" width="6" height="1" fill="#ff0000"/>
<rect x="1022" y="556" width="6" height="1" fill="#ff0000"/>
<rect x="1022" y="556" width="1" height="34" fill="#ff0000"/>
<rect x="1027" y="556" width="1" height="34" fill="#ff0000"/>
<rect x="1022" y="589" width="6" height="1" fill="#ff0000"/>
<rect x="0" y="590" width="1237" height="2" fill="#868686"/>
<text x="3" y="604" class="ss" fill="#0000ff" style="font-weight:bold">MACD</text>
<text x="75" y="604" class="ar11" fill="#000" textLength="44.5" lengthAdjust="spacingAndGlyphs">DIF=6.12</text>
<text x="146" y="604" class="ar11" fill="#0000ff" textLength="48.5" lengthAdjust="spacingAndGlyphs">DEA=8.62</text>
<text x="217" y="604" class="ar11" fill="#ff00ff" textLength="61.5" lengthAdjust="spacingAndGlyphs">MACD=-4.99</text>
<rect x="70" y="607" width="1167" height="1" fill="#a0a0a0"/>
<line x1="68" y1="612.5" x2="1237" y2="612.5" stroke="#a0a0a0" stroke-width="1" stroke-dasharray="3 3"/>
<line x1="68" y1="630.5" x2="1237" y2="630.5" stroke="#a0a0a0" stroke-width="1" stroke-dasharray="3 3"/>
<line x1="68" y1="648.5" x2="1237" y2="648.5" stroke="#a0a0a0" stroke-width="1" stroke-dasharray="3 3"/>
<line x1="68" y1="666.5" x2="1237" y2="666.5" stroke="#a0a0a0" stroke-width="1" stroke-dasharray="3 3"/>
<line x1="70" y1="656.5" x2="1237" y2="656.5" stroke="#a0a0a0" stroke-width="1" stroke-dasharray="3 3"/>
<text x="67" y="616" class="mono" text-anchor="end" fill="#484848">39.32</text>
<text x="67" y="634" class="mono" text-anchor="end" fill="#484848">23.16</text>
<text x="67" y="652" class="mono" text-anchor="end" fill="#484848">7.01</text>
<text x="67" y="670" class="mono" text-anchor="end" fill="#484848">-9.15</text>
<rect x="73" y="656" width="1" height="18" fill="#008000"/>
<rect x="80" y="656" width="1" height="18" fill="#008000"/>
<rect x="87" y="656" width="1" height="17" fill="#008000"/>
<rect x="94" y="656" width="1" height="15" fill="#008000"/>
<rect x="101" y="656" width="1" height="6" fill="#008000"/>
<rect x="108" y="656" width="1" height="2" fill="#008000"/>
<rect x="115" y="655" width="1" height="2" fill="#ff0000"/>
<rect x="122" y="656" width="1" height="1" fill="#ff0000"/>
<rect x="136" y="656" width="1" height="3" fill="#008000"/>
<rect x="143" y="656" width="1" height="5" fill="#008000"/>
<rect x="150" y="656" width="1" height="3" fill="#008000"/>
<rect x="157" y="656" width="1" height="2" fill="#008000"/>
<rect x="164" y="655" width="1" height="2" fill="#ff0000"/>
<rect x="171" y="652" width="1" height="5" fill="#ff0000"/>
<rect x="178" y="651" width="1" height="6" fill="#ff0000"/>
<rect x="185" y="649" width="1" height="8" fill="#ff0000"/>
<rect x="192" y="649" width="1" height="8" fill="#ff0000"/>
<rect x="199" y="649" width="1" height="8" fill="#ff0000"/>
<rect x="206" y="650" width="1" height="7" fill="#ff0000"/>
<rect x="213" y="652" width="1" height="5" fill="#ff0000"/>
<rect x="220" y="652" width="1" height="5" fill="#ff0000"/>
<rect x="227" y="653" width="1" height="4" fill="#ff0000"/>
<rect x="234" y="654" width="1" height="3" fill="#ff0000"/>
<rect x="241" y="652" width="1" height="5" fill="#ff0000"/>
<rect x="248" y="650" width="1" height="7" fill="#ff0000"/>
<rect x="255" y="650" width="1" height="7" fill="#ff0000"/>
<rect x="262" y="647" width="1" height="10" fill="#ff0000"/>
<rect x="269" y="644" width="1" height="13" fill="#ff0000"/>
<rect x="276" y="645" width="1" height="12" fill="#ff0000"/>
<rect x="283" y="648" width="1" height="9" fill="#ff0000"/>
<rect x="290" y="655" width="1" height="2" fill="#ff0000"/>
<rect x="297" y="656" width="1" height="3" fill="#008000"/>
<rect x="304" y="656" width="1" height="6" fill="#008000"/>
<rect x="311" y="656" width="1" height="6" fill="#008000"/>
<rect x="318" y="656" width="1" height="7" fill="#008000"/>
<rect x="325" y="656" width="1" height="6" fill="#008000"/>
<rect x="332" y="656" width="1" height="4" fill="#008000"/>
<rect x="339" y="656" width="1" height="2" fill="#008000"/>
<rect x="353" y="654" width="1" height="3" fill="#ff0000"/>
<rect x="360" y="652" width="1" height="5" fill="#ff0000"/>
<rect x="367" y="652" width="1" height="5" fill="#ff0000"/>
<rect x="374" y="652" width="1" height="5" fill="#ff0000"/>
<rect x="381" y="651" width="1" height="6" fill="#ff0000"/>
<rect x="388" y="655" width="1" height="2" fill="#ff0000"/>
<rect x="395" y="656" width="1" height="2" fill="#008000"/>
<rect x="402" y="656" width="1" height="2" fill="#008000"/>
<rect x="409" y="655" width="1" height="2" fill="#ff0000"/>
<rect x="416" y="653" width="1" height="4" fill="#ff0000"/>
<rect x="423" y="653" width="1" height="4" fill="#ff0000"/>
<rect x="430" y="654" width="1" height="3" fill="#ff0000"/>
<rect x="437" y="655" width="1" height="2" fill="#ff0000"/>
<rect x="444" y="656" width="1" height="1" fill="#ff0000"/>
<rect x="451" y="654" width="1" height="3" fill="#ff0000"/>
<rect x="458" y="653" width="1" height="4" fill="#ff0000"/>
<rect x="465" y="648" width="1" height="9" fill="#ff0000"/>
<rect x="472" y="643" width="1" height="14" fill="#ff0000"/>
<rect x="479" y="633" width="1" height="24" fill="#ff0000"/>
<rect x="486" y="628" width="1" height="29" fill="#ff0000"/>
<rect x="493" y="626" width="1" height="31" fill="#ff0000"/>
<rect x="500" y="625" width="1" height="32" fill="#ff0000"/>
<rect x="507" y="628" width="1" height="29" fill="#ff0000"/>
<rect x="514" y="627" width="1" height="30" fill="#ff0000"/>
<rect x="521" y="628" width="1" height="29" fill="#ff0000"/>
<rect x="528" y="632" width="1" height="25" fill="#ff0000"/>
<rect x="535" y="640" width="1" height="17" fill="#ff0000"/>
<rect x="542" y="646" width="1" height="11" fill="#ff0000"/>
<rect x="549" y="647" width="1" height="10" fill="#ff0000"/>
<rect x="556" y="648" width="1" height="9" fill="#ff0000"/>
<rect x="563" y="651" width="1" height="6" fill="#ff0000"/>
<rect x="570" y="656" width="1" height="1" fill="#ff0000"/>
<rect x="591" y="656" width="1" height="1" fill="#ff0000"/>
<rect x="598" y="656" width="1" height="2" fill="#008000"/>
<rect x="605" y="656" width="1" height="5" fill="#008000"/>
<rect x="612" y="656" width="1" height="6" fill="#008000"/>
<rect x="619" y="656" width="1" height="8" fill="#008000"/>
<rect x="626" y="656" width="1" height="13" fill="#008000"/>
<rect x="633" y="656" width="1" height="16" fill="#008000"/>
<rect x="640" y="656" width="1" height="19" fill="#008000"/>
<rect x="647" y="656" width="1" height="18" fill="#008000"/>
<rect x="654" y="656" width="1" height="15" fill="#008000"/>
<rect x="661" y="656" width="1" height="8" fill="#008000"/>
<rect x="675" y="650" width="1" height="7" fill="#ff0000"/>
<rect x="682" y="644" width="1" height="13" fill="#ff0000"/>
<rect x="689" y="642" width="1" height="15" fill="#ff0000"/>
<rect x="696" y="643" width="1" height="14" fill="#ff0000"/>
<rect x="703" y="646" width="1" height="11" fill="#ff0000"/>
<rect x="710" y="646" width="1" height="11" fill="#ff0000"/>
<rect x="717" y="646" width="1" height="11" fill="#ff0000"/>
<rect x="724" y="654" width="1" height="3" fill="#ff0000"/>
<rect x="731" y="656" width="1" height="2" fill="#008000"/>
<rect x="738" y="656" width="1" height="4" fill="#008000"/>
<rect x="745" y="656" width="1" height="4" fill="#008000"/>
<rect x="752" y="656" width="1" height="9" fill="#008000"/>
<rect x="759" y="656" width="1" height="11" fill="#008000"/>
<rect x="766" y="656" width="1" height="7" fill="#008000"/>
<rect x="773" y="656" width="1" height="5" fill="#008000"/>
<rect x="780" y="656" width="1" height="3" fill="#008000"/>
<rect x="787" y="656" width="1" height="2" fill="#008000"/>
<rect x="794" y="656" width="1" height="1" fill="#ff0000"/>
<rect x="801" y="653" width="1" height="4" fill="#ff0000"/>
<rect x="808" y="651" width="1" height="6" fill="#ff0000"/>
<rect x="815" y="653" width="1" height="4" fill="#ff0000"/>
<rect x="822" y="656" width="1" height="1" fill="#ff0000"/>
<rect x="829" y="656" width="1" height="3" fill="#008000"/>
<rect x="836" y="656" width="1" height="5" fill="#008000"/>
<rect x="843" y="656" width="1" height="8" fill="#008000"/>
<rect x="850" y="656" width="1" height="13" fill="#008000"/>
<rect x="857" y="656" width="1" height="13" fill="#008000"/>
<rect x="864" y="656" width="1" height="15" fill="#008000"/>
<rect x="871" y="656" width="1" height="19" fill="#008000"/>
<rect x="878" y="656" width="1" height="24" fill="#008000"/>
<rect x="885" y="656" width="1" height="26" fill="#008000"/>
<rect x="892" y="656" width="1" height="28" fill="#008000"/>
<rect x="899" y="656" width="1" height="22" fill="#008000"/>
<rect x="906" y="656" width="1" height="13" fill="#008000"/>
<rect x="913" y="656" width="1" height="3" fill="#008000"/>
<rect x="920" y="650" width="1" height="7" fill="#ff0000"/>
<rect x="927" y="643" width="1" height="14" fill="#ff0000"/>
<rect x="934" y="639" width="1" height="18" fill="#ff0000"/>
<rect x="941" y="640" width="1" height="17" fill="#ff0000"/>
<rect x="948" y="641" width="1" height="16" fill="#ff0000"/>
<rect x="955" y="644" width="1" height="13" fill="#ff0000"/>
<rect x="962" y="639" width="1" height="18" fill="#ff0000"/>
<rect x="969" y="638" width="1" height="19" fill="#ff0000"/>
<rect x="976" y="635" width="1" height="22" fill="#ff0000"/>
<rect x="983" y="636" width="1" height="21" fill="#ff0000"/>
<rect x="990" y="640" width="1" height="17" fill="#ff0000"/>
<rect x="997" y="644" width="1" height="13" fill="#ff0000"/>
<rect x="1004" y="651" width="1" height="6" fill="#ff0000"/>
<rect x="1018" y="656" width="1" height="4" fill="#008000"/>
<rect x="1025" y="656" width="1" height="3" fill="#008000"/>
<rect x="1032" y="656" width="1" height="3" fill="#008000"/>
<rect x="1039" y="656" width="1" height="3" fill="#008000"/>
<rect x="1046" y="656" width="1" height="4" fill="#008000"/>
<rect x="1053" y="656" width="1" height="5" fill="#008000"/>
<rect x="1060" y="656" width="1" height="6" fill="#008000"/>
<rect x="1067" y="656" width="1" height="7" fill="#008000"/>
<rect x="1074" y="656" width="1" height="8" fill="#008000"/>
<rect x="1081" y="656" width="1" height="9" fill="#008000"/>
<rect x="1088" y="656" width="1" height="9" fill="#008000"/>
<rect x="1095" y="656" width="1" height="10" fill="#008000"/>
<rect x="1102" y="656" width="1" height="10" fill="#008000"/>
<rect x="1109" y="656" width="1" height="11" fill="#008000"/>
<rect x="1116" y="656" width="1" height="11" fill="#008000"/>
<rect x="1123" y="656" width="1" height="11" fill="#008000"/>
<rect x="1130" y="656" width="1" height="11" fill="#008000"/>
<rect x="1137" y="656" width="1" height="11" fill="#008000"/>
<rect x="1144" y="656" width="1" height="11" fill="#008000"/>
<rect x="1151" y="656" width="1" height="10" fill="#008000"/>
<rect x="1158" y="656" width="1" height="9" fill="#008000"/>
<rect x="1165" y="656" width="1" height="9" fill="#008000"/>
<rect x="1172" y="656" width="1" height="9" fill="#008000"/>
<rect x="1179" y="656" width="1" height="9" fill="#008000"/>
<rect x="1186" y="656" width="1" height="9" fill="#008000"/>
<rect x="1193" y="656" width="1" height="8" fill="#008000"/>
<rect x="1200" y="656" width="1" height="8" fill="#008000"/>
<rect x="1207" y="656" width="1" height="8" fill="#008000"/>
<rect x="1214" y="656" width="1" height="7" fill="#008000"/>
<rect x="1221" y="656" width="1" height="7" fill="#008000"/>
<rect x="1228" y="656" width="1" height="7" fill="#008000"/>
<rect x="1235" y="656" width="1" height="6" fill="#008000"/>
<polyline points="73.5,668.5 80.5,671.3 87.5,673.1 94.5,673.9 101.5,670.5 108.5,667.7 115.5,666.1 122.5,666.9 129.5,667.5 136.5,668.9 143.5,669.7 150.5,668.9 157.5,668.5 164.5,666.5 171.5,664.8 178.5,663.4 185.5,662.1 192.5,661.0 199.5,660.0 206.5,660.0 213.5,660.0 220.5,660.0 227.5,660.0 234.5,659.7 241.5,658.0 248.5,656.1 255.5,654.5 262.5,652.7 269.5,648.8 276.5,648.8 283.5,648.8 290.5,651.9 297.5,654.5 304.5,656.8 311.5,658.0 318.5,658.9 325.5,658.9 332.5,658.9 339.5,657.5 346.5,656.8 353.5,654.8 360.5,653.5 367.5,652.7 374.5,651.9 381.5,651.1 388.5,652.9 395.5,653.7 402.5,654.5 409.5,653.2 416.5,652.1 423.5,651.3 430.5,652.1 437.5,652.1 444.5,652.1 451.5,651.1 458.5,649.5 465.5,645.5 472.5,642.4 479.5,634.5 486.5,628.1 493.5,622.5 500.5,617.6 507.5,615.7 514.5,612.0 521.5,608.4 528.5,607.9 535.5,610.0 542.5,612.3 549.5,610.8 556.5,610.8 563.5,610.8 570.5,613.5 577.5,613.5 584.5,613.5 591.5,613.5 598.5,614.9 605.5,616.5 612.5,618.1 619.5,620.4 626.5,624.5 633.5,628.9 640.5,632.5 647.5,634.1 654.5,634.1 661.5,630.9 668.5,626.8 675.5,622.5 682.5,619.2 689.5,615.7 696.5,613.9 703.5,613.6 710.5,612.8 717.5,612.0 724.5,614.9 731.5,616.8 738.5,618.8 745.5,618.9 752.5,623.0 759.5,624.9 766.5,623.8 773.5,622.8 780.5,622.5 787.5,622.2 794.5,621.7 801.5,619.7 808.5,617.9 815.5,617.9 822.5,619.7 829.5,621.7 836.5,622.8 843.5,625.7 850.5,629.3 857.5,630.5 864.5,634.1 871.5,638.3 878.5,644.0 885.5,649.5 892.5,652.9 899.5,652.7 906.5,648.7 913.5,644.8 920.5,639.5 927.5,633.3 934.5,629.8 941.5,627.8 948.5,626.8 955.5,625.7 962.5,622.2 969.5,618.8 976.5,614.9 983.5,612.8 990.5,611.6 997.5,612.8 1004.5,614.9 1011.5,617.9 1018.5,620.9 1025.5,620.1 1032.5,620.1 1039.5,620.5 1046.5,620.5 1050.5,620.9 1056.9,622.2 1069.8,624.9 1086.0,628.1 1102.2,631.4 1118.3,634.9 1134.5,637.5 1150.7,640.5 1166.8,643.0 1183.0,645.1 1199.2,647.0 1215.5,648.3 1231.5,649.2 1235.5,649.6" fill="none" stroke="#000" stroke-width="1"/>
<polyline points="73.5,661.3 80.5,662.9 87.5,664.8 94.5,666.6 101.5,666.9 108.5,666.9 115.5,666.9 122.5,666.9 129.5,666.9 136.5,667.7 143.5,667.8 150.5,668.2 157.5,668.5 164.5,667.7 171.5,667.3 178.5,666.6 185.5,665.8 192.5,664.8 199.5,663.7 206.5,662.9 213.5,662.4 220.5,661.8 227.5,661.3 234.5,660.8 241.5,660.1 248.5,659.3 255.5,658.4 262.5,657.2 269.5,656.5 276.5,654.0 283.5,652.7 290.5,652.9 297.5,653.7 304.5,654.0 311.5,654.8 318.5,655.9 325.5,656.1 332.5,656.9 339.5,656.9 346.5,656.9 353.5,656.5 360.5,656.1 367.5,655.9 374.5,654.8 381.5,653.7 388.5,653.7 395.5,653.9 402.5,653.9 409.5,653.9 416.5,653.5 423.5,652.9 430.5,652.9 437.5,652.9 444.5,652.7 451.5,652.1 458.5,651.9 465.5,650.8 472.5,648.8 479.5,645.9 486.5,642.4 493.5,638.6 500.5,634.6 507.5,630.5 514.5,626.5 521.5,622.8 528.5,619.5 535.5,617.9 542.5,616.5 549.5,615.5 556.5,614.4 563.5,613.5 570.5,613.5 577.5,613.5 584.5,613.5 591.5,613.5 598.5,614.1 605.5,614.9 612.5,614.9 619.5,616.5 626.5,618.9 633.5,621.2 640.5,622.8 647.5,624.4 654.5,626.0 661.5,626.8 668.5,626.5 675.5,625.7 682.5,624.4 689.5,622.5 696.5,620.9 703.5,619.7 710.5,618.4 717.5,616.8 724.5,616.8 731.5,616.8 738.5,617.1 745.5,617.9 752.5,619.5 759.5,620.9 766.5,621.2 773.5,621.3 780.5,622.0 787.5,622.0 794.5,622.0 801.5,621.2 808.5,620.9 815.5,619.7 822.5,619.7 829.5,620.9 836.5,620.9 843.5,621.7 850.5,623.6 857.5,624.9 864.5,626.5 871.5,628.5 878.5,632.2 885.5,635.7 892.5,639.0 899.5,641.9 906.5,643.0 913.5,643.8 920.5,643.0 927.5,641.4 934.5,639.5 941.5,637.0 948.5,635.1 955.5,633.0 962.5,630.6 969.5,627.8 976.5,625.2 983.5,622.5 990.5,620.5 997.5,618.8 1004.5,617.6 1011.5,617.9 1018.5,618.9 1025.5,618.9 1032.5,618.9 1039.5,620.1 1046.5,620.1 1056.9,620.1 1069.8,622.2 1086.0,624.5 1102.2,627.3 1118.3,630.5 1134.5,633.0 1150.7,635.7 1166.8,637.8 1183.0,640.3 1199.2,642.7 1215.5,645.1 1231.5,646.7 1235.5,647.0" fill="none" stroke="#0000ff" stroke-width="1"/></svg>
</body></html>
